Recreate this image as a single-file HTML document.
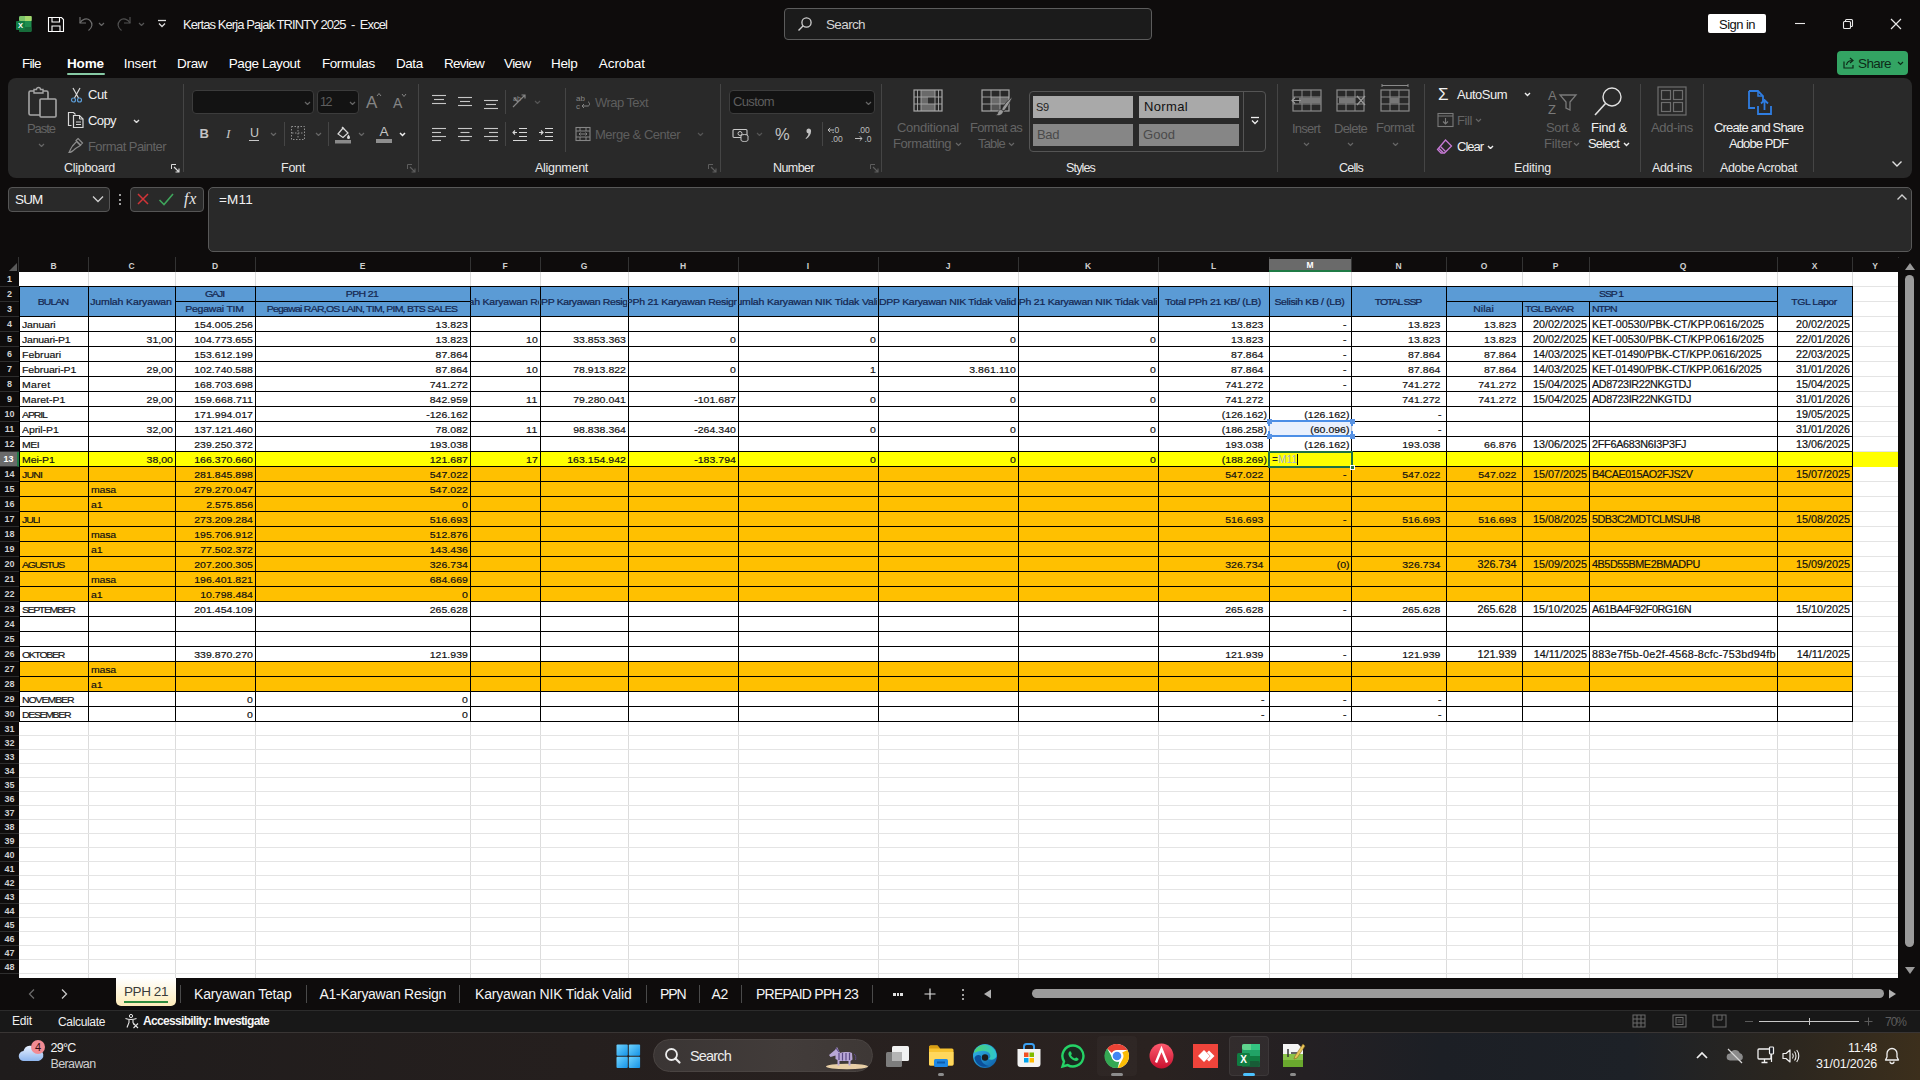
<!DOCTYPE html>
<html lang="id">
<head>
<meta charset="utf-8">
<title>Kertas Kerja Pajak TRINTY 2025 - Excel</title>
<style>
*{box-sizing:border-box;margin:0;padding:0}
html,body{width:1920px;height:1080px;overflow:hidden;background:#0e0c0c}
body{font-family:"Liberation Sans",sans-serif;color:#fff;position:relative;font-size:13px}
div,i,span,svg{position:absolute}
span{position:static}
i{display:block;font-style:normal}
.t{white-space:pre;line-height:1}
/* grid */
.sheet{background:#fff}
.vl{width:1px;background:#dcdcdc}
.hl{left:19px;width:1879px;height:1px;background:#e4e4e4}
.colhdr{background:#0e0c0c}
.ch{top:259px;height:13px;line-height:14px;text-align:center;font-size:8.5px;color:#d0d0d0;font-weight:bold}
.ch.sel{background:#6a6a6a;color:#fff;border-bottom:2px solid #1f7a45;top:259px;height:13px;line-height:13px}
.chs{top:257px;width:1px;height:15px;background:#333}
.corner{left:9px;top:263px;width:0;height:0;border-left:8px solid transparent;border-bottom:8px solid #5a5a5a}
.rowhdr{background:#0e0c0c}
.rh{left:0;width:19px;text-align:center;font-size:9px;color:#d0d0d0;font-weight:bold;border-bottom:1px solid #2e2e2e}
.rh.sel{background:#6a6a6a;color:#fff;border-right:2px solid #1f7a45}
.bh{height:1px;background:#000}
.bv{width:1px;background:#000}
.ht{-webkit-text-stroke:.25px #14264f;overflow:hidden;text-align:center;font-size:10.5px;color:#14264f;white-space:nowrap;display:flex;justify-content:center;align-items:center}
.ht span{flex:none;line-height:12px;transform:translateY(-.8px) scaleY(.92);transform-origin:50% 78%}
.ht.l{justify-content:flex-start;padding-left:3px}
.ct{-webkit-text-stroke:.2px #111;height:15px;line-height:15.5px;font-size:10.5px;color:#111;white-space:nowrap;overflow:hidden}
.ct{transform:scaleY(.92);transform-origin:0 11.4px}
.ct.ar{transform:none}
.ct.r{text-align:right}
.ct.l{text-align:left}
.ct.ar{font-size:10.8px}
.refcell{background:rgba(228,236,252,.8);border:2px solid #4c8ee6;border-left:2px dashed #4c8ee6;border-right:2px dashed #4c8ee6}
.rhd{width:5px;height:5px;background:#5a93e2}
.editcell{background:#ffff00;border:2px solid #1e7145;font-size:10px;line-height:13px;color:#222;padding-left:2px;white-space:nowrap;letter-spacing:.2px}
.editcell .ref{color:#a3b3dc}
.editcell .caret{position:static;display:inline-block;width:1px;height:11px;background:#000;vertical-align:-2px}
.fillh{width:5px;height:5px;background:#1e7145;border:1px solid #fff}
</style>
</head>
<body>
<div id="titlebar">
<svg style="left:16px;top:15px;" width="18" height="18" viewBox="0 0 18 18" fill="none"><rect x="3" y="1" width="12.5" height="16" rx="1.5" fill="#1e8e4e"/><rect x="3" y="1" width="12.5" height="5" rx="1.5" fill="#7cc46a"/><rect x="9" y="1" width="6.5" height="5" fill="#a5d86e"/><rect x="3" y="12" width="12.5" height="5" rx="1" fill="#176b3a"/><rect x="0" y="6" width="9" height="9" rx="1" fill="#107c41"/><text x="4.5" y="13" font-family="Liberation Sans,sans-serif" font-size="7.5" font-weight="bold" fill="#fff" text-anchor="middle">X</text></svg>
<svg style="left:47px;top:15px;" width="18" height="18" viewBox="0 0 18 18" fill="none"><path d="M1.5 2.5h13l2 2V16.5H1.5z" stroke="#fff" stroke-width="1.1"/><path d="M5 2.5v4.5h7.5V2.5M5 16.5v-5.5h8V16.5" stroke="#fff" stroke-width="1.1"/></svg>
<svg style="left:77px;top:15px;" width="18" height="18" viewBox="0 0 18 18" fill="none"><path d="M3 2v6h6" stroke="#6e6e6e" stroke-width="1.2"/><path d="M3 8c2-4 7-5.5 10-2.5s2.5 7-1.5 10" stroke="#6e6e6e" stroke-width="1.2"/></svg>
<svg style="left:97.5px;top:21.75px;" width="7" height="4.5" viewBox="0 0 7 4.5" fill="none"><path d="M1 1 L3.5 3.5 L6 1" stroke="#666" stroke-width="1.2"/></svg>
<svg style="left:115px;top:15px;" width="18" height="18" viewBox="0 0 18 18" fill="none"><path d="M15 2v6H9" stroke="#505050" stroke-width="1.2"/><path d="M15 8c-2-4-7-5.5-10-2.5s-2.5 7 1.5 10" stroke="#505050" stroke-width="1.2"/></svg>
<svg style="left:137.5px;top:21.75px;" width="7" height="4.5" viewBox="0 0 7 4.5" fill="none"><path d="M1 1 L3.5 3.5 L6 1" stroke="#555" stroke-width="1.2"/></svg>
<svg style="left:157px;top:19px;" width="10" height="9" viewBox="0 0 10 9" fill="none"><path d="M1 1.5h8" stroke="#ddd" stroke-width="1.3"/><path d="M2 4.5l3 3 3-3" stroke="#ddd" stroke-width="1.3"/></svg>
<div class="t" style="left:183px;top:18.0px;font-size:13px;color:#f2f2f2;letter-spacing:-0.92px;">Kertas Kerja Pajak TRINTY 2025  -  Excel</div>
<div style="left:784px;top:8px;width:368px;height:32px;background:#1b1b1b;border:1px solid #5c5c5c;border-radius:4px"></div>
<svg style="left:797px;top:16px;" width="16" height="16" viewBox="0 0 16 16" fill="none"><circle cx="9.5" cy="6.5" r="4.6" stroke="#d0d0d0" stroke-width="1.3"/><path d="M6.2 9.8L1.5 14.5" stroke="#d0d0d0" stroke-width="1.4"/></svg>
<div class="t" style="left:826px;top:17.8px;font-size:13.5px;color:#d4d4d4;letter-spacing:-0.63px;">Search</div>
<div style="left:1708px;top:14px;width:58px;height:19px;background:#fff;border-radius:2px"></div>
<div class="t" style="left:1719px;top:18.0px;font-size:13px;color:#111;letter-spacing:-0.54px;">Sign in</div>
<svg style="left:1792px;top:18px;" width="16" height="12" viewBox="0 0 16 12" fill="none"><path d="M3 5.5h10" stroke="#e8e8e8" stroke-width="1.1"/></svg>
<svg style="left:1841px;top:17px;" width="14" height="14" viewBox="0 0 14 14" fill="none"><rect x="2.5" y="4.5" width="7" height="7" rx="1" stroke="#e8e8e8" stroke-width="1.1"/><path d="M4.5 4.5V3.5a1 1 0 011-1h5a1 1 0 011 1v5a1 1 0 01-1 1H9.5" stroke="#e8e8e8" stroke-width="1.1"/></svg>
<svg style="left:1889px;top:17px;" width="14" height="14" viewBox="0 0 14 14" fill="none"><path d="M2 2l10 10M12 2L2 12" stroke="#e8e8e8" stroke-width="1.2"/></svg>
</div>
<div id="tabs">
<div class="t" style="left:22px;top:56.8px;font-size:13.5px;color:#fff;letter-spacing:-0.76px;">File</div>
<div class="t" style="left:67px;top:56.8px;font-size:13.5px;color:#fff;letter-spacing:-0.13px;font-weight:bold;">Home</div>
<div class="t" style="left:123.7px;top:56.8px;font-size:13.5px;color:#fff;letter-spacing:-0.24px;">Insert</div>
<div class="t" style="left:177px;top:56.8px;font-size:13.5px;color:#fff;letter-spacing:-0.3px;">Draw</div>
<div class="t" style="left:228.7px;top:56.8px;font-size:13.5px;color:#fff;letter-spacing:-0.41px;">Page Layout</div>
<div class="t" style="left:322px;top:56.8px;font-size:13.5px;color:#fff;letter-spacing:-0.44px;">Formulas</div>
<div class="t" style="left:396px;top:56.8px;font-size:13.5px;color:#fff;letter-spacing:-0.45px;">Data</div>
<div class="t" style="left:444px;top:56.8px;font-size:13.5px;color:#fff;letter-spacing:-0.71px;">Review</div>
<div class="t" style="left:504px;top:56.8px;font-size:13.5px;color:#fff;letter-spacing:-0.58px;">View</div>
<div class="t" style="left:551px;top:56.8px;font-size:13.5px;color:#fff;letter-spacing:-0.37px;">Help</div>
<div class="t" style="left:598.7px;top:56.8px;font-size:13.5px;color:#fff;letter-spacing:-0.03px;">Acrobat</div>
<div style="left:67px;top:73px;width:38px;height:2px;background:#86c9a4;border-radius:1px"></div>
<div style="left:1837px;top:51px;width:71px;height:24px;background:#33a463;border-radius:4px"></div>
<svg style="left:1842px;top:56px;" width="14" height="14" viewBox="0 0 14 14" fill="none"><path d="M2 5.5v6.5h9V9" stroke="#0d2a18" stroke-width="1.2"/><path d="M4.5 9c.5-3 2.5-4.5 6-4.5M8 2l3 2.5L8 7" stroke="#0d2a18" stroke-width="1.2"/></svg>
<div class="t" style="left:1858px;top:56.8px;font-size:13.5px;color:#0d2a18;letter-spacing:-0.6px;">Share</div>
<svg style="left:1896.5px;top:61.25px;" width="7" height="4.5" viewBox="0 0 7 4.5" fill="none"><path d="M1 1 L3.5 3.5 L6 1" stroke="#0d2a18" stroke-width="1.2"/></svg>
</div><div id="ribbon">
<div style="left:8px;top:78px;width:1904px;height:100px;background:#292929;border-radius:8px"></div>
<div style="left:565px;top:88px;width:1px;height:64px;background:#454545"></div>
<div style="left:183px;top:84px;width:1px;height:88px;background:#454545"></div>
<div style="left:418px;top:84px;width:1px;height:88px;background:#454545"></div>
<div style="left:720px;top:84px;width:1px;height:88px;background:#454545"></div>
<div style="left:881px;top:84px;width:1px;height:88px;background:#454545"></div>
<div style="left:1277px;top:84px;width:1px;height:88px;background:#454545"></div>
<div style="left:1424px;top:84px;width:1px;height:88px;background:#454545"></div>
<div style="left:1640px;top:84px;width:1px;height:88px;background:#454545"></div>
<div style="left:1703px;top:84px;width:1px;height:88px;background:#454545"></div>
<div style="left:1813px;top:84px;width:1px;height:88px;background:#454545"></div>
<div style="left:284px;top:122px;width:1px;height:24px;background:#454545"></div>
<div style="left:328px;top:122px;width:1px;height:24px;background:#454545"></div>
<div style="left:505px;top:122px;width:1px;height:24px;background:#454545"></div>
<div style="left:822px;top:122px;width:1px;height:24px;background:#454545"></div>
<div style="left:505px;top:90px;width:1px;height:24px;background:#454545"></div>
<svg style="left:27px;top:86px;" width="32" height="34" viewBox="0 0 32 34" fill="none"><rect x="2" y="5" width="19" height="24" rx="1.5" stroke="#a6a6a6" stroke-width="1.6"/><path d="M7 5V3.5h2.5a2 2 0 014 0H16V5v2H7z" stroke="#a6a6a6" stroke-width="1.4" fill="#292929"/><rect x="13" y="13" width="16" height="18" rx="1" stroke="#a6a6a6" stroke-width="1.6" fill="#292929"/></svg>
<div class="t" style="left:27px;top:122.0px;font-size:13px;color:#646464;letter-spacing:-1.05px;">Paste</div>
<svg style="left:37.5px;top:142.75px;" width="7" height="4.5" viewBox="0 0 7 4.5" fill="none"><path d="M1 1 L3.5 3.5 L6 1" stroke="#666" stroke-width="1.2"/></svg>
<svg style="left:68px;top:86px;" width="18" height="18" viewBox="0 0 18 18" fill="none"><path d="M5 2l5.5 10M12 2L6.5 12" stroke="#d8d8d8" stroke-width="1.2"/><circle cx="5.5" cy="14" r="2" stroke="#5b9bd5" stroke-width="1.2"/><circle cx="11.5" cy="14" r="2" stroke="#5b9bd5" stroke-width="1.2"/></svg>
<div class="t" style="left:88px;top:88.0px;font-size:13px;color:#f0f0f0;letter-spacing:-0.41px;">Cut</div>
<svg style="left:67px;top:111px;" width="18" height="18" viewBox="0 0 18 18" fill="none"><path d="M4.5 14.5H1.5V1.5h5l2 2" stroke="#d8d8d8" stroke-width="1.2"/><path d="M6.5 4.5h6l3.5 3.5v8.5h-9.5z" stroke="#d8d8d8" stroke-width="1.2"/><path d="M12.5 4.5v3.5h3.5" stroke="#d8d8d8" stroke-width="1"/><path d="M9 11h5M9 13.5h5" stroke="#d8d8d8" stroke-width="1"/></svg>
<div class="t" style="left:88px;top:113.5px;font-size:13px;color:#f0f0f0;letter-spacing:-0.59px;">Copy</div>
<svg style="left:132.5px;top:118.75px;" width="7" height="4.5" viewBox="0 0 7 4.5" fill="none"><path d="M1 1 L3.5 3.5 L6 1" stroke="#ddd" stroke-width="1.4"/></svg>
<svg style="left:67px;top:137px;" width="18" height="18" viewBox="0 0 18 18" fill="none"><path d="M11 1.5l4.5 4.5-2 2-4.5-4.5zM9.5 4.5l4 4-5 3c-2 2-4 4-6.5 4 1-2 2-4.5 3.5-6.5z" stroke="#8c8c8c" stroke-width="1.2"/></svg>
<div class="t" style="left:88px;top:139.5px;font-size:13px;color:#646464;letter-spacing:-0.57px;">Format Painter</div>
<div class="t" style="left:64px;top:162.2px;font-size:12.5px;color:#e8e8e8;letter-spacing:-0.28px;">Clipboard</div>
<svg style="left:171px;top:164px;" width="9" height="9" viewBox="0 0 9 9" fill="none"><path d="M0.5 5V0.5H5" stroke="#dcdcdc" stroke-width="1"/><path d="M3 3l5 5M8 4.5V8H4.5" stroke="#dcdcdc" stroke-width="1.1"/></svg>
<div style="left:192px;top:90px;width:122px;height:24px;background:#131313;border:1px solid #3c3c3c;border-radius:4px"></div>
<svg style="left:303.5px;top:100.75px;" width="7" height="4.5" viewBox="0 0 7 4.5" fill="none"><path d="M1 1 L3.5 3.5 L6 1" stroke="#666" stroke-width="1.2"/></svg>
<div style="left:317px;top:90px;width:42px;height:24px;background:#131313;border:1px solid #3c3c3c;border-radius:4px"></div>
<div class="t" style="left:320px;top:96.2px;font-size:12.5px;color:#5e5e5e;letter-spacing:-1.45px;">12</div>
<svg style="left:348.5px;top:100.75px;" width="7" height="4.5" viewBox="0 0 7 4.5" fill="none"><path d="M1 1 L3.5 3.5 L6 1" stroke="#666" stroke-width="1.2"/></svg>
<div class="t" style="left:366px;top:93.5px;font-size:17px;color:#858585;letter-spacing:-0.34px;">A</div>
<svg style="left:376px;top:92px;" width="6" height="5" viewBox="0 0 6 5" fill="none"><path d="M1 4l2-2.5 2 2.5" stroke="#858585" stroke-width="1"/></svg>
<div class="t" style="left:393px;top:96.0px;font-size:14px;color:#858585;letter-spacing:-0.34px;">A</div>
<svg style="left:401px;top:93px;" width="6" height="5" viewBox="0 0 6 5" fill="none"><path d="M1 1l2 2.5 2-2.5" stroke="#858585" stroke-width="1"/></svg>
<div class="t" style="left:199.5px;top:126.5px;font-size:13px;color:#c4c4c4;letter-spacing:-1.89px;font-weight:bold;">B</div>
<div class="t" style="left:226px;top:127.2px;font-size:13.5px;color:#c4c4c4;letter-spacing:1.25px;font-style:italic;font-family:Liberation Serif,serif;">I</div>
<div class="t" style="left:250px;top:126.8px;font-size:12.5px;color:#c8c8c8;letter-spacing:-1.03px;">U</div>
<div style="left:249px;top:139.5px;width:10px;height:1px;background:#c8c8c8"></div>
<svg style="left:269.5px;top:131.75px;" width="7" height="4.5" viewBox="0 0 7 4.5" fill="none"><path d="M1 1 L3.5 3.5 L6 1" stroke="#666" stroke-width="1.2"/></svg>
<svg style="left:290px;top:125px;" width="16" height="16" viewBox="0 0 16 16" fill="none"><rect x="1.5" y="1.5" width="13" height="13" stroke="#909090" stroke-width="1" stroke-dasharray="1.5 1.5"/><path d="M8 2v12M2 8h12" stroke="#909090" stroke-width="1" stroke-dasharray="1.5 1.5"/></svg>
<svg style="left:314.5px;top:131.75px;" width="7" height="4.5" viewBox="0 0 7 4.5" fill="none"><path d="M1 1 L3.5 3.5 L6 1" stroke="#666" stroke-width="1.2"/></svg>
<svg style="left:334px;top:124px;" width="18" height="20" viewBox="0 0 18 20" fill="none"><path d="M4 10l5-6 5 5-5 4.5z" stroke="#d8d8d8" stroke-width="1.2"/><path d="M8 3l2 2" stroke="#d8d8d8" stroke-width="1.2"/><path d="M14.5 10.5c1 1.5 1.5 2.2 1.5 3a1.5 1.5 0 01-3 0c0-.8.5-1.5 1.5-3z" fill="#d8d8d8"/><rect x="1" y="16" width="16" height="3.5" fill="#8a8a8a"/></svg>
<svg style="left:357.5px;top:131.75px;" width="7" height="4.5" viewBox="0 0 7 4.5" fill="none"><path d="M1 1 L3.5 3.5 L6 1" stroke="#666" stroke-width="1.2"/></svg>
<div class="t" style="left:379.5px;top:125.2px;font-size:13.5px;color:#c4c4c4;letter-spacing:0.5px;">A</div>
<div style="left:376px;top:139px;width:16px;height:3.5px;background:#8e8e8e"></div>
<svg style="left:399.0px;top:132.25px;" width="7" height="4.5" viewBox="0 0 7 4.5" fill="none"><path d="M1 1 L3.5 3.5 L6 1" stroke="#eee" stroke-width="1.5"/></svg>
<div class="t" style="left:281px;top:162.2px;font-size:12.5px;color:#e8e8e8;letter-spacing:-0.25px;">Font</div>
<svg style="left:407px;top:164px;" width="9" height="9" viewBox="0 0 9 9" fill="none"><path d="M0.5 5V0.5H5" stroke="#5e5e5e" stroke-width="1"/><path d="M3 3l5 5M8 4.5V8H4.5" stroke="#5e5e5e" stroke-width="1.1"/></svg>
<svg style="left:431px;top:93px;" width="16" height="16" viewBox="0 0 16 16" fill="none"><path d="M1 2.5h14" stroke="#c6c6c6" stroke-width="1.1"/><path d="M3 6.5h10" stroke="#c6c6c6" stroke-width="1.1"/><path d="M1 10.5h14" stroke="#c6c6c6" stroke-width="1.1"/></svg>
<svg style="left:457px;top:95px;" width="16" height="16" viewBox="0 0 16 16" fill="none"><path d="M1 2.5h14" stroke="#c6c6c6" stroke-width="1.1"/><path d="M3 6.5h10" stroke="#c6c6c6" stroke-width="1.1"/><path d="M1 10.5h14" stroke="#c6c6c6" stroke-width="1.1"/></svg>
<svg style="left:483px;top:98px;" width="16" height="16" viewBox="0 0 16 16" fill="none"><path d="M1 2.5h14" stroke="#c6c6c6" stroke-width="1.1"/><path d="M3 6.5h10" stroke="#c6c6c6" stroke-width="1.1"/><path d="M1 10.5h14" stroke="#c6c6c6" stroke-width="1.1"/></svg>
<svg style="left:431px;top:126px;" width="16" height="16" viewBox="0 0 16 16" fill="none"><path d="M1 2.5h14" stroke="#c6c6c6" stroke-width="1.1"/><path d="M1 6.5h9" stroke="#c6c6c6" stroke-width="1.1"/><path d="M1 10.5h14" stroke="#c6c6c6" stroke-width="1.1"/><path d="M1 14.5h9" stroke="#c6c6c6" stroke-width="1.1"/></svg>
<svg style="left:457px;top:126px;" width="16" height="16" viewBox="0 0 16 16" fill="none"><path d="M1 2.5h14" stroke="#c6c6c6" stroke-width="1.1"/><path d="M3.5 6.5h9" stroke="#c6c6c6" stroke-width="1.1"/><path d="M1 10.5h14" stroke="#c6c6c6" stroke-width="1.1"/><path d="M3.5 14.5h9" stroke="#c6c6c6" stroke-width="1.1"/></svg>
<svg style="left:483px;top:126px;" width="16" height="16" viewBox="0 0 16 16" fill="none"><path d="M1 2.5h14" stroke="#c6c6c6" stroke-width="1.1"/><path d="M6 6.5h9" stroke="#c6c6c6" stroke-width="1.1"/><path d="M1 10.5h14" stroke="#c6c6c6" stroke-width="1.1"/><path d="M6 14.5h9" stroke="#c6c6c6" stroke-width="1.1"/></svg>
<svg style="left:511px;top:92px;" width="18" height="18" viewBox="0 0 18 18" fill="none"><path d="M2 15L14 3M10.5 3H14v3.5" stroke="#858585" stroke-width="1.2"/><path d="M3 6l4 4" stroke="#858585" stroke-width="1.2"/><text x="2" y="9" font-size="7" fill="#858585" font-family="Liberation Sans,sans-serif">ab</text></svg>
<svg style="left:533.5px;top:99.75px;" width="7" height="4.5" viewBox="0 0 7 4.5" fill="none"><path d="M1 1 L3.5 3.5 L6 1" stroke="#555" stroke-width="1.2"/></svg>
<svg style="left:512px;top:126px;" width="16" height="16" viewBox="0 0 16 16" fill="none"><path d="M7 2.5h8M7 6.5h8M7 10.5h8M1 14.5h14" stroke="#d8d8d8" stroke-width="1.1"/><path d="M5 6.5H1M3 4.5l-2 2 2 2" stroke="#d8d8d8" stroke-width="1.1"/></svg>
<svg style="left:538px;top:126px;" width="16" height="16" viewBox="0 0 16 16" fill="none"><path d="M7 2.5h8M7 6.5h8M7 10.5h8M1 14.5h14" stroke="#d8d8d8" stroke-width="1.1"/><path d="M1 6.5h4M3 4.5l2 2-2 2" stroke="#d8d8d8" stroke-width="1.1"/></svg>
<svg style="left:575px;top:94px;" width="16" height="16" viewBox="0 0 16 16" fill="none"><text x="1" y="7" font-size="8" fill="#858585" font-family="Liberation Sans,sans-serif">ab</text><text x="1" y="15" font-size="8" fill="#858585" font-family="Liberation Sans,sans-serif">c</text><path d="M7 12h6c2 0 2-4 0-4M9 10l-2 2 2 2" stroke="#858585" stroke-width="1"/></svg>
<div class="t" style="left:595px;top:95.5px;font-size:13px;color:#5e5e5e;letter-spacing:-0.56px;">Wrap Text</div>
<svg style="left:575px;top:126px;" width="16" height="16" viewBox="0 0 16 16" fill="none"><rect x="1" y="1.5" width="14" height="13" stroke="#858585" stroke-width="1.1"/><path d="M1 5h14M1 11h14M5 1.5V5M11 1.5V5M5 11v3.5M11 11v3.5" stroke="#858585" stroke-width="1"/><path d="M4 8h8M5.5 6.5L4 8l1.5 1.5M10.5 6.5L12 8l-1.5 1.5" stroke="#858585" stroke-width="1"/></svg>
<div class="t" style="left:595px;top:127.5px;font-size:13px;color:#5e5e5e;letter-spacing:-0.48px;">Merge &amp; Center</div>
<svg style="left:696.5px;top:131.75px;" width="7" height="4.5" viewBox="0 0 7 4.5" fill="none"><path d="M1 1 L3.5 3.5 L6 1" stroke="#555" stroke-width="1.2"/></svg>
<div class="t" style="left:535px;top:162.2px;font-size:12.5px;color:#e8e8e8;letter-spacing:-0.29px;">Alignment</div>
<svg style="left:708px;top:164px;" width="9" height="9" viewBox="0 0 9 9" fill="none"><path d="M0.5 5V0.5H5" stroke="#5e5e5e" stroke-width="1"/><path d="M3 3l5 5M8 4.5V8H4.5" stroke="#5e5e5e" stroke-width="1.1"/></svg>
<div style="left:729px;top:90px;width:146px;height:24px;background:#131313;border:1px solid #3c3c3c;border-radius:4px"></div>
<div class="t" style="left:733px;top:95.0px;font-size:13px;color:#5e5e5e;letter-spacing:-0.63px;">Custom</div>
<svg style="left:864.5px;top:100.75px;" width="7" height="4.5" viewBox="0 0 7 4.5" fill="none"><path d="M1 1 L3.5 3.5 L6 1" stroke="#666" stroke-width="1.2"/></svg>
<svg style="left:732px;top:127px;" width="18" height="16" viewBox="0 0 18 16" fill="none"><rect x="1" y="2.5" width="14" height="8" rx="1" stroke="#c8c8c8" stroke-width="1.1"/><circle cx="8" cy="6.5" r="2" stroke="#c8c8c8" stroke-width="1"/><ellipse cx="12.5" cy="9" rx="3.5" ry="1.5" stroke="#c8c8c8" stroke-width="1" fill="#292929"/><path d="M9 9v4c0 2 7 2 7 0V9" stroke="#c8c8c8" stroke-width="1" fill="#292929"/></svg>
<svg style="left:755.5px;top:131.75px;" width="7" height="4.5" viewBox="0 0 7 4.5" fill="none"><path d="M1 1 L3.5 3.5 L6 1" stroke="#555" stroke-width="1.2"/></svg>
<div class="t" style="left:775px;top:126.2px;font-size:16.5px;color:#c4c4c4;letter-spacing:0.33px;">%</div>
<svg style="left:802px;top:126px;" width="12" height="16" viewBox="0 0 12 16" fill="none"><path d="M6.5 2.5a2.6 2.6 0 012.6 2.6c0 3.5-2 6-5 8l-.6-.8c1.8-1.4 2.8-2.8 3-4.700a2.6 2.6 0 010-5.1z" fill="#c0c0c0"/></svg>
<svg style="left:826px;top:125px;" width="20" height="19" viewBox="0 0 20 19" fill="none"><text x="8.5" y="8" font-size="8.5" fill="#bdbdbd" font-family="Liberation Sans,sans-serif">0</text><text x="5" y="17" font-size="8.5" fill="#bdbdbd" font-family="Liberation Sans,sans-serif">.00</text><path d="M2 5h6M4.2 2.8L2 5l2.2 2.2" stroke="#bdbdbd" stroke-width="1"/><rect x="6.5" y="6.8" width="1.2" height="1.2" fill="#bdbdbd"/></svg>
<svg style="left:852px;top:125px;" width="20" height="19" viewBox="0 0 20 19" fill="none"><text x="6" y="8" font-size="8.5" fill="#bdbdbd" font-family="Liberation Sans,sans-serif">.00</text><text x="12.5" y="17" font-size="8.5" fill="#bdbdbd" font-family="Liberation Sans,sans-serif">.0</text><path d="M3 13.5h7M7.8 11.3l2.2 2.2-2.2 2.2" stroke="#bdbdbd" stroke-width="1"/></svg>
<div class="t" style="left:773px;top:162.2px;font-size:12.5px;color:#e8e8e8;letter-spacing:-0.58px;">Number</div>
<svg style="left:870px;top:164px;" width="9" height="9" viewBox="0 0 9 9" fill="none"><path d="M0.5 5V0.5H5" stroke="#5e5e5e" stroke-width="1"/><path d="M3 3l5 5M8 4.5V8H4.5" stroke="#5e5e5e" stroke-width="1.1"/></svg>
<svg style="left:913px;top:89px;" width="30" height="24" viewBox="0 0 30 24" fill="none"><rect x="8" y="1" width="14" height="7" fill="#6a6a6a"/><rect x="8" y="8" width="7" height="7" fill="#6a6a6a"/><rect x="8" y="15" width="14" height="7" fill="#6a6a6a"/><rect x="15" y="8" width="7" height="7" fill="#2f2f2f"/><rect x="1" y="1" width="28" height="21" stroke="#a8a8a8" stroke-width="1.2"/><path d="M1 8h28M1 15h28M8 1v21M22 1v21M25.5 1v21M4.5 1v21" stroke="#a8a8a8" stroke-width=".900"/></svg>
<div class="t" style="left:897px;top:121.0px;font-size:13px;color:#646464;letter-spacing:-0.28px;">Conditional</div>
<div class="t" style="left:893px;top:137.0px;font-size:13px;color:#646464;letter-spacing:-0.41px;">Formatting</div>
<svg style="left:954.5px;top:142.25px;" width="7" height="4.5" viewBox="0 0 7 4.5" fill="none"><path d="M1 1 L3.5 3.5 L6 1" stroke="#666" stroke-width="1.2"/></svg>
<svg style="left:981px;top:89px;" width="32" height="28" viewBox="0 0 32 28" fill="none"><rect x="10" y="8" width="18" height="7" fill="#6a6a6a"/><rect x="10" y="15" width="9" height="7" fill="#555"/><rect x="1" y="1" width="27" height="21" stroke="#a8a8a8" stroke-width="1.2"/><path d="M1 8h27M1 15h27M10 1v21M19 1v21" stroke="#a8a8a8" stroke-width=".900"/><path d="M30.5 8.5c-4 3-8 8-10 12l2.5 1.5c3-4 6-8 8-13z" fill="#9a9a9a" stroke="#292929" stroke-width=".8"/><path d="M20 20.5c-2 0-3 1.5-3.5 4.5-1 1-2 1-3 .5 3 2 8 1.5 9-3.5z" fill="#9a9a9a" stroke="#292929" stroke-width=".6"/></svg>
<div class="t" style="left:970px;top:121.0px;font-size:13px;color:#646464;letter-spacing:-0.72px;">Format as</div>
<div class="t" style="left:978px;top:137.0px;font-size:13px;color:#646464;letter-spacing:-0.82px;">Table</div>
<svg style="left:1007.5px;top:142.25px;" width="7" height="4.5" viewBox="0 0 7 4.5" fill="none"><path d="M1 1 L3.5 3.5 L6 1" stroke="#666" stroke-width="1.2"/></svg>
<div style="left:1029px;top:91px;width:237px;height:61px;border:1px solid #555;border-radius:4px"></div>
<div style="left:1243px;top:91px;width:1px;height:61px;background:#555"></div>
<div style="left:1033px;top:96px;width:100px;height:22px;background:#a9a9a9"></div>
<div class="t" style="left:1036px;top:102.0px;font-size:11px;color:#222;letter-spacing:-0.23px;">S9</div>
<div style="left:1139px;top:96px;width:100px;height:22px;background:#a9a9a9"></div>
<div class="t" style="left:1144px;top:99.5px;font-size:13px;color:#111;letter-spacing:0.35px;">Normal</div>
<div style="left:1033px;top:124px;width:100px;height:22px;background:#868686"></div>
<div class="t" style="left:1037px;top:127.5px;font-size:13px;color:#4a4a4a;letter-spacing:-0.38px;">Bad</div>
<div style="left:1139px;top:124px;width:100px;height:22px;background:#868686"></div>
<div class="t" style="left:1143px;top:127.5px;font-size:13px;color:#4a4a4a;letter-spacing:0.05px;">Good</div>
<svg style="left:1250px;top:116px;" width="10" height="9" viewBox="0 0 10 9" fill="none"><path d="M1 1.5h8" stroke="#eee" stroke-width="1.3"/><path d="M2 4.5l3 3 3-3" stroke="#eee" stroke-width="1.3"/></svg>
<div class="t" style="left:1066px;top:162.2px;font-size:12.5px;color:#e8e8e8;letter-spacing:-0.84px;">Styles</div>
<svg style="left:1291px;top:89px;" width="32" height="24" viewBox="0 0 32 24" fill="none"><rect x="2" y="1" width="28" height="21" stroke="#8a8a8a" stroke-width="1.2"/><path d="M2 8h28M2 15h28M11 1v21M20 1v21" stroke="#8a8a8a" stroke-width="1"/><rect x="8" y="8.5" width="22" height="6" fill="#777"/><path d="M1 11.5h9M4 8.5l-3 3 3 3" stroke="#9a9a9a" stroke-width="1.2"/></svg>
<div class="t" style="left:1292px;top:122.0px;font-size:13px;color:#646464;letter-spacing:-0.75px;">Insert</div>
<svg style="left:1303.0px;top:142.25px;" width="7" height="4.5" viewBox="0 0 7 4.5" fill="none"><path d="M1 1 L3.5 3.5 L6 1" stroke="#666" stroke-width="1.2"/></svg>
<svg style="left:1336px;top:89px;" width="32" height="24" viewBox="0 0 32 24" fill="none"><rect x="1" y="1" width="27" height="21" stroke="#8a8a8a" stroke-width="1.2"/><path d="M1 8h27M1 15h27M10 1v21M19 1v21" stroke="#8a8a8a" stroke-width="1"/><rect x="3" y="8.5" width="16" height="6" fill="#777"/><path d="M21 7l8 9M29 7l-8 9" stroke="#9a9a9a" stroke-width="1.3"/></svg>
<div class="t" style="left:1334px;top:122.0px;font-size:13px;color:#646464;letter-spacing:-0.76px;">Delete</div>
<svg style="left:1346.5px;top:142.25px;" width="7" height="4.5" viewBox="0 0 7 4.5" fill="none"><path d="M1 1 L3.5 3.5 L6 1" stroke="#666" stroke-width="1.2"/></svg>
<svg style="left:1380px;top:84px;" width="30" height="29" viewBox="0 0 30 29" fill="none"><path d="M2 1.5h26M2 0v3M28 0v3" stroke="#8a8a8a" stroke-width="1"/><rect x="1" y="6" width="28" height="21" stroke="#8a8a8a" stroke-width="1.2"/><path d="M1 13h28M1 20h28M10 6v21M19 6v21" stroke="#8a8a8a" stroke-width="1"/><rect x="10" y="13.5" width="9" height="6" fill="#777"/></svg>
<div class="t" style="left:1376px;top:121.0px;font-size:13px;color:#646464;letter-spacing:-0.53px;">Format</div>
<svg style="left:1391.5px;top:141.75px;" width="7" height="4.5" viewBox="0 0 7 4.5" fill="none"><path d="M1 1 L3.5 3.5 L6 1" stroke="#666" stroke-width="1.2"/></svg>
<div class="t" style="left:1339px;top:162.2px;font-size:12.5px;color:#e8e8e8;letter-spacing:-0.76px;">Cells</div>
<div class="t" style="left:1438px;top:86.0px;font-size:17px;color:#f0f0f0;letter-spacing:1.49px;">Σ</div>
<div class="t" style="left:1457px;top:88.0px;font-size:13px;color:#f0f0f0;letter-spacing:-0.5px;">AutoSum</div>
<svg style="left:1523.5px;top:92.25px;" width="7" height="4.5" viewBox="0 0 7 4.5" fill="none"><path d="M1 1 L3.5 3.5 L6 1" stroke="#eee" stroke-width="1.4"/></svg>
<svg style="left:1437px;top:112px;" width="17" height="16" viewBox="0 0 17 16" fill="none"><rect x="1" y="1.5" width="15" height="13" stroke="#7a7a7a" stroke-width="1.1"/><path d="M1 4h15M8.5 6v6M6 9.5l2.5 2.5 2.5-2.5" stroke="#7a7a7a" stroke-width="1.1"/></svg>
<div class="t" style="left:1457px;top:113.5px;font-size:13px;color:#646464;letter-spacing:-0.4px;">Fill</div>
<svg style="left:1474.5px;top:118.25px;" width="7" height="4.5" viewBox="0 0 7 4.5" fill="none"><path d="M1 1 L3.5 3.5 L6 1" stroke="#666" stroke-width="1.2"/></svg>
<svg style="left:1436px;top:138px;" width="18" height="17" viewBox="0 0 18 17" fill="none"><path d="M9.5 2l6 6-7 7H5l-3.5-3.5z" stroke="#c77ad6" stroke-width="1.3"/><path d="M4.5 8.5l5 5" stroke="#c77ad6" stroke-width="1.3"/><path d="M2.5 11l3.5 3.5h2l-4.5-4.5z" fill="#c77ad6"/></svg>
<div class="t" style="left:1457px;top:139.5px;font-size:13px;color:#f0f0f0;letter-spacing:-1.01px;">Clear</div>
<svg style="left:1486.5px;top:144.75px;" width="7" height="4.5" viewBox="0 0 7 4.5" fill="none"><path d="M1 1 L3.5 3.5 L6 1" stroke="#eee" stroke-width="1.4"/></svg>
<svg style="left:1547px;top:87px;" width="32" height="30" viewBox="0 0 32 30" fill="none"><text x="1" y="13" font-size="13" fill="#7a7a7a" font-family="Liberation Sans,sans-serif">A</text><text x="1" y="27" font-size="13" fill="#7a7a7a" font-family="Liberation Sans,sans-serif">Z</text><path d="M13 8h16l-6 7v8l-4-2v-6z" stroke="#7a7a7a" stroke-width="1.3"/></svg>
<div class="t" style="left:1546px;top:121.0px;font-size:13px;color:#646464;letter-spacing:-0.35px;">Sort &amp;</div>
<div class="t" style="left:1544px;top:137.0px;font-size:13px;color:#646464;letter-spacing:-0.15px;">Filter</div>
<svg style="left:1572.5px;top:142.25px;" width="7" height="4.5" viewBox="0 0 7 4.5" fill="none"><path d="M1 1 L3.5 3.5 L6 1" stroke="#666" stroke-width="1.2"/></svg>
<svg style="left:1593px;top:86px;" width="32" height="32" viewBox="0 0 32 32" fill="none"><circle cx="19" cy="11" r="9" stroke="#e0e0e0" stroke-width="1.4"/><path d="M12.5 17.5L2 29" stroke="#e0e0e0" stroke-width="1.6"/></svg>
<div class="t" style="left:1591px;top:121.0px;font-size:13px;color:#f0f0f0;letter-spacing:-0.26px;">Find &amp;</div>
<div class="t" style="left:1588px;top:137.0px;font-size:13px;color:#f0f0f0;letter-spacing:-0.85px;">Select</div>
<svg style="left:1622.5px;top:142.25px;" width="7" height="4.5" viewBox="0 0 7 4.5" fill="none"><path d="M1 1 L3.5 3.5 L6 1" stroke="#eee" stroke-width="1.4"/></svg>
<div class="t" style="left:1514px;top:162.2px;font-size:12.5px;color:#e8e8e8;letter-spacing:-0.17px;">Editing</div>
<svg style="left:1657px;top:86px;" width="30" height="30" viewBox="0 0 30 30" fill="none"><rect x="1" y="1" width="28" height="28" stroke="#6e6e6e" stroke-width="1.2"/><rect x="4.5" y="4.5" width="9" height="9" stroke="#6e6e6e" stroke-width="1.2"/><rect x="16.5" y="4.5" width="9" height="9" stroke="#6e6e6e" stroke-width="1.2"/><rect x="4.5" y="16.5" width="9" height="9" stroke="#6e6e6e" stroke-width="1.2"/><rect x="16.5" y="16.5" width="9" height="9" stroke="#6e6e6e" stroke-width="1.2"/></svg>
<div class="t" style="left:1651px;top:121.0px;font-size:13px;color:#666;letter-spacing:-0.3px;">Add-ins</div>
<div class="t" style="left:1652px;top:162.2px;font-size:12.5px;color:#e8e8e8;letter-spacing:-0.34px;">Add-ins</div>
<svg style="left:1747px;top:89px;" width="26" height="28" viewBox="0 0 26 28" fill="none"><path d="M2 2h9l5 5v6M2 2v17h6" stroke="#2f7de1" stroke-width="1.8"/><path d="M11 2v5h5" stroke="#2f7de1" stroke-width="1.5"/><path d="M11 17v8h13v-8" stroke="#2f7de1" stroke-width="1.8"/><path d="M17.5 21V11M14 14.5l3.5-3.5 3.5 3.5" stroke="#2f7de1" stroke-width="1.8"/></svg>
<div class="t" style="left:1714px;top:121.0px;font-size:13px;color:#f0f0f0;letter-spacing:-0.85px;">Create and Share</div>
<div class="t" style="left:1729px;top:137.0px;font-size:13px;color:#f0f0f0;letter-spacing:-0.91px;">Adobe PDF</div>
<div class="t" style="left:1720px;top:162.2px;font-size:12.5px;color:#e8e8e8;letter-spacing:-0.38px;">Adobe Acrobat</div>
<svg style="left:1891px;top:160px;" width="12" height="8" viewBox="0 0 12 8" fill="none"><path d="M1.5 1.5l4.5 4.5 4.5-4.5" stroke="#e0e0e0" stroke-width="1.4"/></svg>
</div><div id="fbar">
<div style="left:8px;top:187px;width:102px;height:25px;background:#292929;border:1px solid #555;border-radius:4px"></div>
<div class="t" style="left:15px;top:192.8px;font-size:13.5px;color:#f2f2f2;letter-spacing:-0.83px;">SUM</div>
<svg style="left:91px;top:195px;" width="14" height="9" viewBox="0 0 14 9" fill="none"><path d="M2 1.5l5 5 5-5" stroke="#d0d0d0" stroke-width="1.3"/></svg>
<div style="left:119px;top:194px;width:2px;height:2px;background:#cfcfcf;border-radius:1px"></div>
<div style="left:119px;top:198.5px;width:2px;height:2px;background:#cfcfcf;border-radius:1px"></div>
<div style="left:119px;top:203px;width:2px;height:2px;background:#cfcfcf;border-radius:1px"></div>
<div style="left:130px;top:187px;width:74px;height:25px;background:#292929;border:1px solid #555;border-radius:4px"></div>
<svg style="left:136px;top:192px;" width="14" height="14" viewBox="0 0 14 14" fill="none"><path d="M2 2l10 10M12 2L2 12" stroke="#d13438" stroke-width="1.5"/></svg>
<svg style="left:158px;top:192px;" width="16" height="14" viewBox="0 0 16 14" fill="none"><path d="M1.5 8l4.5 4.5L15 2" stroke="#3fa45b" stroke-width="1.6"/></svg>
<div class="t" style="left:184px;top:190.5px;font-size:16px;color:#e6e6e6;letter-spacing:0.78px;font-style:italic;font-family:Liberation Serif,serif;">fx</div>
<div style="left:208px;top:186.5px;width:1704px;height:65px;background:#292929;border:1px solid #585858;border-radius:5px"></div>
<div class="t" style="left:219px;top:192.8px;font-size:13.5px;color:#f2f2f2;letter-spacing:0.21px;">=M11</div>
<svg style="left:1896px;top:193px;" width="12" height="8" viewBox="0 0 12 8" fill="none"><path d="M1.5 6.5l4.5-4.5 4.5 4.5" stroke="#d0d0d0" stroke-width="1.4"/></svg>
</div><div id="grid">
<div class="sheet" style="left:19px;top:272px;width:1879px;height:706px"></div>
<i class="vl" style="left:88px;top:272px;height:706px"></i>
<i class="vl" style="left:175px;top:272px;height:706px"></i>
<i class="vl" style="left:255px;top:272px;height:706px"></i>
<i class="vl" style="left:470px;top:272px;height:706px"></i>
<i class="vl" style="left:540px;top:272px;height:706px"></i>
<i class="vl" style="left:628px;top:272px;height:706px"></i>
<i class="vl" style="left:738px;top:272px;height:706px"></i>
<i class="vl" style="left:878px;top:272px;height:706px"></i>
<i class="vl" style="left:1018px;top:272px;height:706px"></i>
<i class="vl" style="left:1158px;top:272px;height:706px"></i>
<i class="vl" style="left:1269px;top:272px;height:706px"></i>
<i class="vl" style="left:1351px;top:272px;height:706px"></i>
<i class="vl" style="left:1446px;top:272px;height:706px"></i>
<i class="vl" style="left:1522px;top:272px;height:706px"></i>
<i class="vl" style="left:1589px;top:272px;height:706px"></i>
<i class="vl" style="left:1777px;top:272px;height:706px"></i>
<i class="vl" style="left:1852px;top:272px;height:706px"></i>
<i class="vl" style="left:1898px;top:272px;height:706px"></i>
<i class="hl" style="top:286px"></i>
<i class="hl" style="top:301px"></i>
<i class="hl" style="top:316px"></i>
<i class="hl" style="top:331px"></i>
<i class="hl" style="top:346px"></i>
<i class="hl" style="top:361px"></i>
<i class="hl" style="top:376px"></i>
<i class="hl" style="top:391px"></i>
<i class="hl" style="top:406px"></i>
<i class="hl" style="top:421px"></i>
<i class="hl" style="top:436px"></i>
<i class="hl" style="top:451px"></i>
<i class="hl" style="top:466px"></i>
<i class="hl" style="top:481px"></i>
<i class="hl" style="top:496px"></i>
<i class="hl" style="top:511px"></i>
<i class="hl" style="top:526px"></i>
<i class="hl" style="top:541px"></i>
<i class="hl" style="top:556px"></i>
<i class="hl" style="top:571px"></i>
<i class="hl" style="top:586px"></i>
<i class="hl" style="top:601px"></i>
<i class="hl" style="top:616px"></i>
<i class="hl" style="top:631px"></i>
<i class="hl" style="top:646px"></i>
<i class="hl" style="top:661px"></i>
<i class="hl" style="top:676px"></i>
<i class="hl" style="top:691px"></i>
<i class="hl" style="top:706px"></i>
<i class="hl" style="top:721px"></i>
<i class="hl" style="top:735px"></i>
<i class="hl" style="top:749px"></i>
<i class="hl" style="top:763px"></i>
<i class="hl" style="top:777px"></i>
<i class="hl" style="top:791px"></i>
<i class="hl" style="top:805px"></i>
<i class="hl" style="top:819px"></i>
<i class="hl" style="top:833px"></i>
<i class="hl" style="top:847px"></i>
<i class="hl" style="top:861px"></i>
<i class="hl" style="top:875px"></i>
<i class="hl" style="top:889px"></i>
<i class="hl" style="top:903px"></i>
<i class="hl" style="top:917px"></i>
<i class="hl" style="top:931px"></i>
<i class="hl" style="top:945px"></i>
<i class="hl" style="top:959px"></i>
<i class="hl" style="top:973px"></i>
<div class="colhdr" style="left:0;top:258px;width:1898px;height:14px"></div>
<div class="ch" style="left:19px;width:69px">B</div>
<i class="chs" style="left:88px"></i>
<div class="ch" style="left:88px;width:87px">C</div>
<i class="chs" style="left:175px"></i>
<div class="ch" style="left:175px;width:80px">D</div>
<i class="chs" style="left:255px"></i>
<div class="ch" style="left:255px;width:215px">E</div>
<i class="chs" style="left:470px"></i>
<div class="ch" style="left:470px;width:70px">F</div>
<i class="chs" style="left:540px"></i>
<div class="ch" style="left:540px;width:88px">G</div>
<i class="chs" style="left:628px"></i>
<div class="ch" style="left:628px;width:110px">H</div>
<i class="chs" style="left:738px"></i>
<div class="ch" style="left:738px;width:140px">I</div>
<i class="chs" style="left:878px"></i>
<div class="ch" style="left:878px;width:140px">J</div>
<i class="chs" style="left:1018px"></i>
<div class="ch" style="left:1018px;width:140px">K</div>
<i class="chs" style="left:1158px"></i>
<div class="ch" style="left:1158px;width:111px">L</div>
<i class="chs" style="left:1269px"></i>
<div class="ch sel" style="left:1269px;width:82px">M</div>
<i class="chs" style="left:1351px"></i>
<div class="ch" style="left:1351px;width:95px">N</div>
<i class="chs" style="left:1446px"></i>
<div class="ch" style="left:1446px;width:76px">O</div>
<i class="chs" style="left:1522px"></i>
<div class="ch" style="left:1522px;width:67px">P</div>
<i class="chs" style="left:1589px"></i>
<div class="ch" style="left:1589px;width:188px">Q</div>
<i class="chs" style="left:1777px"></i>
<div class="ch" style="left:1777px;width:75px">X</div>
<i class="chs" style="left:1852px"></i>
<div class="ch" style="left:1852px;width:46px">Y</div>
<i class="chs" style="left:1898px"></i>
<i class="chs" style="left:18px"></i>
<i class="corner"></i>
<div class="rowhdr" style="left:0;top:272px;width:19px;height:706px"></div>
<div class="rh" style="top:272px;height:15px;line-height:15px">1</div>
<div class="rh" style="top:287px;height:15px;line-height:15px">2</div>
<div class="rh" style="top:302px;height:15px;line-height:15px">3</div>
<div class="rh" style="top:317px;height:15px;line-height:15px">4</div>
<div class="rh" style="top:332px;height:15px;line-height:15px">5</div>
<div class="rh" style="top:347px;height:15px;line-height:15px">6</div>
<div class="rh" style="top:362px;height:15px;line-height:15px">7</div>
<div class="rh" style="top:377px;height:15px;line-height:15px">8</div>
<div class="rh" style="top:392px;height:15px;line-height:15px">9</div>
<div class="rh" style="top:407px;height:15px;line-height:15px">10</div>
<div class="rh" style="top:422px;height:15px;line-height:15px">11</div>
<div class="rh" style="top:437px;height:15px;line-height:15px">12</div>
<div class="rh sel" style="top:452px;height:15px;line-height:15px">13</div>
<div class="rh" style="top:467px;height:15px;line-height:15px">14</div>
<div class="rh" style="top:482px;height:15px;line-height:15px">15</div>
<div class="rh" style="top:497px;height:15px;line-height:15px">16</div>
<div class="rh" style="top:512px;height:15px;line-height:15px">17</div>
<div class="rh" style="top:527px;height:15px;line-height:15px">18</div>
<div class="rh" style="top:542px;height:15px;line-height:15px">19</div>
<div class="rh" style="top:557px;height:15px;line-height:15px">20</div>
<div class="rh" style="top:572px;height:15px;line-height:15px">21</div>
<div class="rh" style="top:587px;height:15px;line-height:15px">22</div>
<div class="rh" style="top:602px;height:15px;line-height:15px">23</div>
<div class="rh" style="top:617px;height:15px;line-height:15px">24</div>
<div class="rh" style="top:632px;height:15px;line-height:15px">25</div>
<div class="rh" style="top:647px;height:15px;line-height:15px">26</div>
<div class="rh" style="top:662px;height:15px;line-height:15px">27</div>
<div class="rh" style="top:677px;height:15px;line-height:15px">28</div>
<div class="rh" style="top:692px;height:15px;line-height:15px">29</div>
<div class="rh" style="top:707px;height:15px;line-height:15px">30</div>
<div class="rh" style="top:722px;height:14px;line-height:14px">31</div>
<div class="rh" style="top:736px;height:14px;line-height:14px">32</div>
<div class="rh" style="top:750px;height:14px;line-height:14px">33</div>
<div class="rh" style="top:764px;height:14px;line-height:14px">34</div>
<div class="rh" style="top:778px;height:14px;line-height:14px">35</div>
<div class="rh" style="top:792px;height:14px;line-height:14px">36</div>
<div class="rh" style="top:806px;height:14px;line-height:14px">37</div>
<div class="rh" style="top:820px;height:14px;line-height:14px">38</div>
<div class="rh" style="top:834px;height:14px;line-height:14px">39</div>
<div class="rh" style="top:848px;height:14px;line-height:14px">40</div>
<div class="rh" style="top:862px;height:14px;line-height:14px">41</div>
<div class="rh" style="top:876px;height:14px;line-height:14px">42</div>
<div class="rh" style="top:890px;height:14px;line-height:14px">43</div>
<div class="rh" style="top:904px;height:14px;line-height:14px">44</div>
<div class="rh" style="top:918px;height:14px;line-height:14px">45</div>
<div class="rh" style="top:932px;height:14px;line-height:14px">46</div>
<div class="rh" style="top:946px;height:14px;line-height:14px">47</div>
<div class="rh" style="top:960px;height:14px;line-height:14px">48</div>
<div class="fill" style="left:19px;top:452px;width:1879px;height:15px;background:#ffff00"></div>
<div class="fill" style="left:19px;top:467px;width:1833px;height:15px;background:#ffc000"></div>
<div class="fill" style="left:19px;top:482px;width:1833px;height:15px;background:#ffc000"></div>
<div class="fill" style="left:19px;top:497px;width:1833px;height:15px;background:#ffc000"></div>
<div class="fill" style="left:19px;top:512px;width:1833px;height:15px;background:#ffc000"></div>
<div class="fill" style="left:19px;top:527px;width:1833px;height:15px;background:#ffc000"></div>
<div class="fill" style="left:19px;top:542px;width:1833px;height:15px;background:#ffc000"></div>
<div class="fill" style="left:19px;top:557px;width:1833px;height:15px;background:#ffc000"></div>
<div class="fill" style="left:19px;top:572px;width:1833px;height:15px;background:#ffc000"></div>
<div class="fill" style="left:19px;top:587px;width:1833px;height:15px;background:#ffc000"></div>
<div class="fill" style="left:19px;top:662px;width:1833px;height:15px;background:#ffc000"></div>
<div class="fill" style="left:19px;top:677px;width:1833px;height:15px;background:#ffc000"></div>
<div class="fill" style="left:19px;top:287px;width:1833px;height:30px;background:#5b9bd5"></div>
<i class="bh" style="left:19px;top:286px;width:1834px"></i>
<i class="bh" style="left:19px;top:316px;width:1834px"></i>
<i class="bh" style="left:19px;top:331px;width:1834px"></i>
<i class="bh" style="left:19px;top:346px;width:1834px"></i>
<i class="bh" style="left:19px;top:361px;width:1834px"></i>
<i class="bh" style="left:19px;top:376px;width:1834px"></i>
<i class="bh" style="left:19px;top:391px;width:1834px"></i>
<i class="bh" style="left:19px;top:406px;width:1834px"></i>
<i class="bh" style="left:19px;top:421px;width:1834px"></i>
<i class="bh" style="left:19px;top:436px;width:1834px"></i>
<i class="bh" style="left:19px;top:451px;width:1834px"></i>
<i class="bh" style="left:19px;top:466px;width:1834px"></i>
<i class="bh" style="left:19px;top:481px;width:1834px"></i>
<i class="bh" style="left:19px;top:496px;width:1834px"></i>
<i class="bh" style="left:19px;top:511px;width:1834px"></i>
<i class="bh" style="left:19px;top:526px;width:1834px"></i>
<i class="bh" style="left:19px;top:541px;width:1834px"></i>
<i class="bh" style="left:19px;top:556px;width:1834px"></i>
<i class="bh" style="left:19px;top:571px;width:1834px"></i>
<i class="bh" style="left:19px;top:586px;width:1834px"></i>
<i class="bh" style="left:19px;top:601px;width:1834px"></i>
<i class="bh" style="left:19px;top:616px;width:1834px"></i>
<i class="bh" style="left:19px;top:631px;width:1834px"></i>
<i class="bh" style="left:19px;top:646px;width:1834px"></i>
<i class="bh" style="left:19px;top:661px;width:1834px"></i>
<i class="bh" style="left:19px;top:676px;width:1834px"></i>
<i class="bh" style="left:19px;top:691px;width:1834px"></i>
<i class="bh" style="left:19px;top:706px;width:1834px"></i>
<i class="bh" style="left:19px;top:721px;width:1834px"></i>
<i class="bh" style="left:175px;top:301px;width:295px"></i>
<i class="bh" style="left:1446px;top:301px;width:331px"></i>
<i class="bv" style="left:88px;top:286px;height:436px"></i>
<i class="bv" style="left:175px;top:286px;height:436px"></i>
<i class="bv" style="left:255px;top:286px;height:436px"></i>
<i class="bv" style="left:470px;top:286px;height:436px"></i>
<i class="bv" style="left:540px;top:286px;height:436px"></i>
<i class="bv" style="left:628px;top:286px;height:436px"></i>
<i class="bv" style="left:738px;top:286px;height:436px"></i>
<i class="bv" style="left:878px;top:286px;height:436px"></i>
<i class="bv" style="left:1018px;top:286px;height:436px"></i>
<i class="bv" style="left:1158px;top:286px;height:436px"></i>
<i class="bv" style="left:1269px;top:286px;height:436px"></i>
<i class="bv" style="left:1351px;top:286px;height:436px"></i>
<i class="bv" style="left:1446px;top:286px;height:436px"></i>
<i class="bv" style="left:1522px;top:301px;height:421px"></i>
<i class="bv" style="left:1589px;top:301px;height:421px"></i>
<i class="bv" style="left:1777px;top:286px;height:436px"></i>
<i class="bv" style="left:1852px;top:286px;height:436px"></i>
<i class="bv" style="left:19px;top:286px;height:436px"></i>
<div class="ht" style="left:19px;top:287px;width:68px;height:29px;line-height:29px;letter-spacing:-0.92px"><span>BULAN</span></div>
<div class="ht" style="left:88px;top:287px;width:86px;height:29px;line-height:29px;letter-spacing:-0.12px"><span>Jumlah Karyawan</span></div>
<div class="ht" style="left:175px;top:287px;width:79px;height:14px;line-height:14px;letter-spacing:-1.05px"><span>GAJI</span></div>
<div class="ht" style="left:175px;top:302px;width:79px;height:14px;line-height:14px;letter-spacing:-0.23px"><span>Pegawai TIM</span></div>
<div class="ht" style="left:255px;top:287px;width:214px;height:14px;line-height:14px;letter-spacing:-0.64px"><span>PPH 21</span></div>
<div class="ht" style="left:255px;top:302px;width:214px;height:14px;line-height:14px;letter-spacing:-0.76px"><span>Pegawai RAR,OS LAIN, TIM, PIM, BTS SALES</span></div>
<div class="ht" style="left:470px;top:287px;width:69px;height:29px;line-height:29px;letter-spacing:-0.21px"><span>Jumlah Karyawan Resign</span></div>
<div class="ht" style="left:540px;top:287px;width:87px;height:29px;line-height:29px;letter-spacing:-0.39px"><span>DPP Karyawan Resign</span></div>
<div class="ht" style="left:628px;top:287px;width:109px;height:29px;line-height:29px;letter-spacing:-0.29px"><span>PPh 21 Karyawan Resign</span></div>
<div class="ht" style="left:738px;top:287px;width:139px;height:29px;line-height:29px;letter-spacing:-0.16px"><span>Jumlah Karyawan NIK Tidak Valid</span></div>
<div class="ht" style="left:878px;top:287px;width:139px;height:29px;line-height:29px;letter-spacing:-0.28px"><span>DPP Karyawan NIK Tidak Valid</span></div>
<div class="ht" style="left:1018px;top:287px;width:139px;height:29px;line-height:29px;letter-spacing:-0.22px"><span>PPh 21 Karyawan NIK Tidak Valid</span></div>
<div class="ht" style="left:1158px;top:287px;width:110px;height:29px;line-height:29px;letter-spacing:-0.3px"><span>Total PPh 21 KB/ (LB)</span></div>
<div class="ht" style="left:1269px;top:287px;width:81px;height:29px;line-height:29px;letter-spacing:-0.38px"><span>Selisih KB / (LB)</span></div>
<div class="ht" style="left:1351px;top:287px;width:94px;height:29px;line-height:29px;letter-spacing:-1.12px"><span>TOTAL SSP</span></div>
<div class="ht" style="left:1446px;top:287px;width:330px;height:14px;line-height:14px;letter-spacing:-1.12px"><span>SSP 1</span></div>
<div class="ht" style="left:1446px;top:302px;width:75px;height:14px;line-height:14px;letter-spacing:0.01px"><span>Nilai</span></div>
<div class="ht l" style="left:1522px;top:302px;width:66px;height:14px;line-height:14px;letter-spacing:-0.95px"><span>TGL BAYAR</span></div>
<div class="ht l" style="left:1589px;top:302px;width:187px;height:14px;line-height:14px;letter-spacing:-0.98px"><span>NTPN</span></div>
<div class="ht" style="left:1777px;top:287px;width:74px;height:29px;line-height:29px;letter-spacing:-0.49px"><span>TGL Lapor</span></div>
<div class="refcell" style="left:1268px;top:420px;width:85px;height:17px"></div>
<i class="rhd" style="left:1267px;top:419px"></i>
<i class="rhd" style="left:1350px;top:419px"></i>
<i class="rhd" style="left:1267px;top:434px"></i>
<i class="rhd" style="left:1350px;top:434px"></i>
<div class="ct l" style="left:22px;top:317px;width:65px;letter-spacing:-0.14px">Januari</div>
<div class="ct r" style="left:175px;top:317px;width:78px;letter-spacing:0.04px">154.005.256</div>
<div class="ct r" style="left:255px;top:317px;width:213px;letter-spacing:0.05px">13.823</div>
<div class="ct r" style="left:1158px;top:317px;width:105.5px;letter-spacing:0.05px">13.823</div>
<div class="ct r" style="left:1269px;top:317px;width:77.5px;letter-spacing:-0.04px">-</div>
<div class="ct r" style="left:1351px;top:317px;width:89.5px;letter-spacing:0.05px">13.823</div>
<div class="ct r" style="left:1446px;top:317px;width:70.5px;letter-spacing:0.05px">13.823</div>
<div class="ct r ar" style="left:1522px;top:317px;width:65px">20/02/2025</div>
<div class="ct l ar" style="left:1592px;top:317px;width:184px;letter-spacing:-0.06px">KET-00530/PBK-CT/KPP.0616/2025</div>
<div class="ct r ar" style="left:1777px;top:317px;width:73px">20/02/2025</div>
<div class="ct l" style="left:22px;top:332px;width:65px;letter-spacing:-0.23px">Januari-P1</div>
<div class="ct r" style="left:88px;top:332px;width:85px;letter-spacing:0.03px">31,00</div>
<div class="ct r" style="left:175px;top:332px;width:78px;letter-spacing:0.04px">104.773.655</div>
<div class="ct r" style="left:255px;top:332px;width:213px;letter-spacing:0.05px">13.823</div>
<div class="ct r" style="left:470px;top:332px;width:68px;letter-spacing:0.16px">10</div>
<div class="ct r" style="left:540px;top:332px;width:86px;letter-spacing:0.03px">33.853.363</div>
<div class="ct r" style="left:628px;top:332px;width:108px;letter-spacing:0.16px">0</div>
<div class="ct r" style="left:738px;top:332px;width:138px;letter-spacing:0.16px">0</div>
<div class="ct r" style="left:878px;top:332px;width:138px;letter-spacing:0.16px">0</div>
<div class="ct r" style="left:1018px;top:332px;width:138px;letter-spacing:0.16px">0</div>
<div class="ct r" style="left:1158px;top:332px;width:105.5px;letter-spacing:0.05px">13.823</div>
<div class="ct r" style="left:1269px;top:332px;width:77.5px;letter-spacing:-0.04px">-</div>
<div class="ct r" style="left:1351px;top:332px;width:89.5px;letter-spacing:0.05px">13.823</div>
<div class="ct r" style="left:1446px;top:332px;width:70.5px;letter-spacing:0.05px">13.823</div>
<div class="ct r ar" style="left:1522px;top:332px;width:65px">20/02/2025</div>
<div class="ct l ar" style="left:1592px;top:332px;width:184px;letter-spacing:-0.06px">KET-00530/PBK-CT/KPP.0616/2025</div>
<div class="ct r ar" style="left:1777px;top:332px;width:73px">22/01/2026</div>
<div class="ct l" style="left:22px;top:347px;width:65px;letter-spacing:0.01px">Februari</div>
<div class="ct r" style="left:175px;top:347px;width:78px;letter-spacing:0.04px">153.612.199</div>
<div class="ct r" style="left:255px;top:347px;width:213px;letter-spacing:0.05px">87.864</div>
<div class="ct r" style="left:1158px;top:347px;width:105.5px;letter-spacing:0.05px">87.864</div>
<div class="ct r" style="left:1269px;top:347px;width:77.5px;letter-spacing:-0.04px">-</div>
<div class="ct r" style="left:1351px;top:347px;width:89.5px;letter-spacing:0.05px">87.864</div>
<div class="ct r" style="left:1446px;top:347px;width:70.5px;letter-spacing:0.05px">87.864</div>
<div class="ct r ar" style="left:1522px;top:347px;width:65px">14/03/2025</div>
<div class="ct l ar" style="left:1592px;top:347px;width:184px;letter-spacing:-0.14px">KET-01490/PBK-CT/KPP.0616/2025</div>
<div class="ct r ar" style="left:1777px;top:347px;width:73px">22/03/2025</div>
<div class="ct l" style="left:22px;top:362px;width:65px;letter-spacing:-0.11px">Februari-P1</div>
<div class="ct r" style="left:88px;top:362px;width:85px;letter-spacing:0.03px">29,00</div>
<div class="ct r" style="left:175px;top:362px;width:78px;letter-spacing:0.04px">102.740.588</div>
<div class="ct r" style="left:255px;top:362px;width:213px;letter-spacing:0.05px">87.864</div>
<div class="ct r" style="left:470px;top:362px;width:68px;letter-spacing:0.16px">10</div>
<div class="ct r" style="left:540px;top:362px;width:86px;letter-spacing:0.03px">78.913.822</div>
<div class="ct r" style="left:628px;top:362px;width:108px;letter-spacing:0.16px">0</div>
<div class="ct r" style="left:738px;top:362px;width:138px;letter-spacing:0.16px">1</div>
<div class="ct r" style="left:878px;top:362px;width:138px;letter-spacing:0.1px">3.861.110</div>
<div class="ct r" style="left:1018px;top:362px;width:138px;letter-spacing:0.16px">0</div>
<div class="ct r" style="left:1158px;top:362px;width:105.5px;letter-spacing:0.05px">87.864</div>
<div class="ct r" style="left:1269px;top:362px;width:77.5px;letter-spacing:-0.04px">-</div>
<div class="ct r" style="left:1351px;top:362px;width:89.5px;letter-spacing:0.05px">87.864</div>
<div class="ct r" style="left:1446px;top:362px;width:70.5px;letter-spacing:0.05px">87.864</div>
<div class="ct r ar" style="left:1522px;top:362px;width:65px">14/03/2025</div>
<div class="ct l ar" style="left:1592px;top:362px;width:184px;letter-spacing:-0.14px">KET-01490/PBK-CT/KPP.0616/2025</div>
<div class="ct r ar" style="left:1777px;top:362px;width:73px">31/01/2026</div>
<div class="ct l" style="left:22px;top:377px;width:65px;letter-spacing:0.32px">Maret</div>
<div class="ct r" style="left:175px;top:377px;width:78px;letter-spacing:0.04px">168.703.698</div>
<div class="ct r" style="left:255px;top:377px;width:213px;letter-spacing:0.06px">741.272</div>
<div class="ct r" style="left:1158px;top:377px;width:105.5px;letter-spacing:0.06px">741.272</div>
<div class="ct r" style="left:1269px;top:377px;width:77.5px;letter-spacing:-0.04px">-</div>
<div class="ct r" style="left:1351px;top:377px;width:89.5px;letter-spacing:0.06px">741.272</div>
<div class="ct r" style="left:1446px;top:377px;width:70.5px;letter-spacing:0.06px">741.272</div>
<div class="ct r ar" style="left:1522px;top:377px;width:65px">15/04/2025</div>
<div class="ct l ar" style="left:1592px;top:377px;width:184px;letter-spacing:-0.38px">AD8723IR22NKGTDJ</div>
<div class="ct r ar" style="left:1777px;top:377px;width:73px">15/04/2025</div>
<div class="ct l" style="left:22px;top:392px;width:65px;letter-spacing:0.04px">Maret-P1</div>
<div class="ct r" style="left:88px;top:392px;width:85px;letter-spacing:0.03px">29,00</div>
<div class="ct r" style="left:175px;top:392px;width:78px;letter-spacing:0.11px">159.668.711</div>
<div class="ct r" style="left:255px;top:392px;width:213px;letter-spacing:0.06px">842.959</div>
<div class="ct r" style="left:470px;top:392px;width:68px;letter-spacing:0.55px">11</div>
<div class="ct r" style="left:540px;top:392px;width:86px;letter-spacing:0.03px">79.280.041</div>
<div class="ct r" style="left:628px;top:392px;width:108px;letter-spacing:0.05px">-101.687</div>
<div class="ct r" style="left:738px;top:392px;width:138px;letter-spacing:0.16px">0</div>
<div class="ct r" style="left:878px;top:392px;width:138px;letter-spacing:0.16px">0</div>
<div class="ct r" style="left:1018px;top:392px;width:138px;letter-spacing:0.16px">0</div>
<div class="ct r" style="left:1158px;top:392px;width:105.5px;letter-spacing:0.06px">741.272</div>
<div class="ct r" style="left:1351px;top:392px;width:89.5px;letter-spacing:0.06px">741.272</div>
<div class="ct r" style="left:1446px;top:392px;width:70.5px;letter-spacing:0.06px">741.272</div>
<div class="ct r ar" style="left:1522px;top:392px;width:65px">15/04/2025</div>
<div class="ct l ar" style="left:1592px;top:392px;width:184px;letter-spacing:-0.38px">AD8723IR22NKGTDJ</div>
<div class="ct r ar" style="left:1777px;top:392px;width:73px">31/01/2026</div>
<div class="ct l" style="left:22px;top:407px;width:65px;letter-spacing:-1.1px">APRIL</div>
<div class="ct r" style="left:175px;top:407px;width:78px;letter-spacing:0.04px">171.994.017</div>
<div class="ct r" style="left:255px;top:407px;width:213px;letter-spacing:0.05px">-126.162</div>
<div class="ct r" style="left:1158px;top:407px;width:109px;letter-spacing:0.03px">(126.162)</div>
<div class="ct r" style="left:1269px;top:407px;width:80.5px;letter-spacing:0.03px">(126.162)</div>
<div class="ct r" style="left:1351px;top:407px;width:90.5px;letter-spacing:-0.04px">-</div>
<div class="ct r ar" style="left:1777px;top:407px;width:73px">19/05/2025</div>
<div class="ct l" style="left:22px;top:422px;width:65px;letter-spacing:-0.08px">April-P1</div>
<div class="ct r" style="left:88px;top:422px;width:85px;letter-spacing:0.03px">32,00</div>
<div class="ct r" style="left:175px;top:422px;width:78px;letter-spacing:0.04px">137.121.460</div>
<div class="ct r" style="left:255px;top:422px;width:213px;letter-spacing:0.05px">78.082</div>
<div class="ct r" style="left:470px;top:422px;width:68px;letter-spacing:0.55px">11</div>
<div class="ct r" style="left:540px;top:422px;width:86px;letter-spacing:0.03px">98.838.364</div>
<div class="ct r" style="left:628px;top:422px;width:108px;letter-spacing:0.05px">-264.340</div>
<div class="ct r" style="left:738px;top:422px;width:138px;letter-spacing:0.16px">0</div>
<div class="ct r" style="left:878px;top:422px;width:138px;letter-spacing:0.16px">0</div>
<div class="ct r" style="left:1018px;top:422px;width:138px;letter-spacing:0.16px">0</div>
<div class="ct r" style="left:1158px;top:422px;width:109px;letter-spacing:0.03px">(186.258)</div>
<div class="ct r" style="left:1269px;top:422px;width:80.5px;letter-spacing:0.02px">(60.096)</div>
<div class="ct r" style="left:1351px;top:422px;width:90.5px;letter-spacing:-0.04px">-</div>
<div class="ct r ar" style="left:1777px;top:422px;width:73px">31/01/2026</div>
<div class="ct l" style="left:22px;top:437px;width:65px;letter-spacing:-0.51px">MEI</div>
<div class="ct r" style="left:175px;top:437px;width:78px;letter-spacing:0.04px">239.250.372</div>
<div class="ct r" style="left:255px;top:437px;width:213px;letter-spacing:0.06px">193.038</div>
<div class="ct r" style="left:1158px;top:437px;width:105.5px;letter-spacing:0.06px">193.038</div>
<div class="ct r" style="left:1269px;top:437px;width:80.5px;letter-spacing:0.03px">(126.162)</div>
<div class="ct r" style="left:1351px;top:437px;width:89.5px;letter-spacing:0.06px">193.038</div>
<div class="ct r" style="left:1446px;top:437px;width:70.5px;letter-spacing:0.05px">66.876</div>
<div class="ct r ar" style="left:1522px;top:437px;width:65px">13/06/2025</div>
<div class="ct l ar" style="left:1592px;top:437px;width:184px;letter-spacing:-0.26px">2FF6A683N6I3P3FJ</div>
<div class="ct r ar" style="left:1777px;top:437px;width:73px">13/06/2025</div>
<div class="ct l" style="left:22px;top:452px;width:65px;letter-spacing:-0.1px">Mei-P1</div>
<div class="ct r" style="left:88px;top:452px;width:85px;letter-spacing:0.03px">38,00</div>
<div class="ct r" style="left:175px;top:452px;width:78px;letter-spacing:0.04px">166.370.660</div>
<div class="ct r" style="left:255px;top:452px;width:213px;letter-spacing:0.06px">121.687</div>
<div class="ct r" style="left:470px;top:452px;width:68px;letter-spacing:0.16px">17</div>
<div class="ct r" style="left:540px;top:452px;width:86px;letter-spacing:0.04px">163.154.942</div>
<div class="ct r" style="left:628px;top:452px;width:108px;letter-spacing:0.05px">-183.794</div>
<div class="ct r" style="left:738px;top:452px;width:138px;letter-spacing:0.16px">0</div>
<div class="ct r" style="left:878px;top:452px;width:138px;letter-spacing:0.16px">0</div>
<div class="ct r" style="left:1018px;top:452px;width:138px;letter-spacing:0.16px">0</div>
<div class="ct r" style="left:1158px;top:452px;width:109px;letter-spacing:0.03px">(188.269)</div>
<div class="ct l" style="left:22px;top:467px;width:65px;letter-spacing:-0.84px">JUNI</div>
<div class="ct r" style="left:175px;top:467px;width:78px;letter-spacing:0.04px">281.845.898</div>
<div class="ct r" style="left:255px;top:467px;width:213px;letter-spacing:0.06px">547.022</div>
<div class="ct r" style="left:1158px;top:467px;width:105.5px;letter-spacing:0.06px">547.022</div>
<div class="ct r" style="left:1269px;top:467px;width:77.5px;letter-spacing:-0.04px">-</div>
<div class="ct r" style="left:1351px;top:467px;width:89.5px;letter-spacing:0.06px">547.022</div>
<div class="ct r" style="left:1446px;top:467px;width:70.5px;letter-spacing:0.06px">547.022</div>
<div class="ct r ar" style="left:1522px;top:467px;width:65px">15/07/2025</div>
<div class="ct l ar" style="left:1592px;top:467px;width:184px;letter-spacing:-0.43px">B4CAE015AO2FJS2V</div>
<div class="ct r ar" style="left:1777px;top:467px;width:73px">15/07/2025</div>
<div class="ct l" style="left:91px;top:482px;width:83px;letter-spacing:-0.19px">masa</div>
<div class="ct r" style="left:175px;top:482px;width:78px;letter-spacing:0.04px">279.270.047</div>
<div class="ct r" style="left:255px;top:482px;width:213px;letter-spacing:0.06px">547.022</div>
<div class="ct l" style="left:91px;top:497px;width:83px;letter-spacing:-0.06px">a1</div>
<div class="ct r" style="left:175px;top:497px;width:78px;letter-spacing:0.01px">2.575.856</div>
<div class="ct r" style="left:255px;top:497px;width:213px;letter-spacing:0.16px">0</div>
<div class="ct l" style="left:22px;top:512px;width:65px;letter-spacing:-1.01px">JULI</div>
<div class="ct r" style="left:175px;top:512px;width:78px;letter-spacing:0.04px">273.209.284</div>
<div class="ct r" style="left:255px;top:512px;width:213px;letter-spacing:0.06px">516.693</div>
<div class="ct r" style="left:1158px;top:512px;width:105.5px;letter-spacing:0.06px">516.693</div>
<div class="ct r" style="left:1269px;top:512px;width:77.5px;letter-spacing:-0.04px">-</div>
<div class="ct r" style="left:1351px;top:512px;width:89.5px;letter-spacing:0.06px">516.693</div>
<div class="ct r" style="left:1446px;top:512px;width:70.5px;letter-spacing:0.06px">516.693</div>
<div class="ct r ar" style="left:1522px;top:512px;width:65px">15/08/2025</div>
<div class="ct l ar" style="left:1592px;top:512px;width:184px;letter-spacing:-0.5px">5DB3C2MDTCLMSUH8</div>
<div class="ct r ar" style="left:1777px;top:512px;width:73px">15/08/2025</div>
<div class="ct l" style="left:91px;top:527px;width:83px;letter-spacing:-0.19px">masa</div>
<div class="ct r" style="left:175px;top:527px;width:78px;letter-spacing:0.04px">195.706.912</div>
<div class="ct r" style="left:255px;top:527px;width:213px;letter-spacing:0.06px">512.876</div>
<div class="ct l" style="left:91px;top:542px;width:83px;letter-spacing:-0.06px">a1</div>
<div class="ct r" style="left:175px;top:542px;width:78px;letter-spacing:0.03px">77.502.372</div>
<div class="ct r" style="left:255px;top:542px;width:213px;letter-spacing:0.06px">143.436</div>
<div class="ct l" style="left:22px;top:557px;width:65px;letter-spacing:-1.26px">AGUSTUS</div>
<div class="ct r" style="left:175px;top:557px;width:78px;letter-spacing:0.04px">207.200.305</div>
<div class="ct r" style="left:255px;top:557px;width:213px;letter-spacing:0.06px">326.734</div>
<div class="ct r" style="left:1158px;top:557px;width:105.5px;letter-spacing:0.06px">326.734</div>
<div class="ct r" style="left:1269px;top:557px;width:80.5px;letter-spacing:0.01px">(0)</div>
<div class="ct r" style="left:1351px;top:557px;width:89.5px;letter-spacing:0.06px">326.734</div>
<div class="ct r ar" style="left:1446px;top:557px;width:70.5px">326.734</div>
<div class="ct r ar" style="left:1522px;top:557px;width:65px">15/09/2025</div>
<div class="ct l ar" style="left:1592px;top:557px;width:184px;letter-spacing:-0.42px">4B5D55BME2BMADPU</div>
<div class="ct r ar" style="left:1777px;top:557px;width:73px">15/09/2025</div>
<div class="ct l" style="left:91px;top:572px;width:83px;letter-spacing:-0.19px">masa</div>
<div class="ct r" style="left:175px;top:572px;width:78px;letter-spacing:0.04px">196.401.821</div>
<div class="ct r" style="left:255px;top:572px;width:213px;letter-spacing:0.06px">684.669</div>
<div class="ct l" style="left:91px;top:587px;width:83px;letter-spacing:-0.06px">a1</div>
<div class="ct r" style="left:175px;top:587px;width:78px;letter-spacing:0.03px">10.798.484</div>
<div class="ct r" style="left:255px;top:587px;width:213px;letter-spacing:0.16px">0</div>
<div class="ct l" style="left:22px;top:602px;width:65px;letter-spacing:-1.38px">SEPTEMBER</div>
<div class="ct r" style="left:175px;top:602px;width:78px;letter-spacing:0.04px">201.454.109</div>
<div class="ct r" style="left:255px;top:602px;width:213px;letter-spacing:0.06px">265.628</div>
<div class="ct r" style="left:1158px;top:602px;width:105.5px;letter-spacing:0.06px">265.628</div>
<div class="ct r" style="left:1269px;top:602px;width:77.5px;letter-spacing:-0.04px">-</div>
<div class="ct r" style="left:1351px;top:602px;width:89.5px;letter-spacing:0.06px">265.628</div>
<div class="ct r ar" style="left:1446px;top:602px;width:70.5px">265.628</div>
<div class="ct r ar" style="left:1522px;top:602px;width:65px">15/10/2025</div>
<div class="ct l ar" style="left:1592px;top:602px;width:184px;letter-spacing:-0.49px">A61BA4F92F0RG16N</div>
<div class="ct r ar" style="left:1777px;top:602px;width:73px">15/10/2025</div>
<div class="ct l" style="left:22px;top:647px;width:65px;letter-spacing:-1.31px">OKTOBER</div>
<div class="ct r" style="left:175px;top:647px;width:78px;letter-spacing:0.04px">339.870.270</div>
<div class="ct r" style="left:255px;top:647px;width:213px;letter-spacing:0.06px">121.939</div>
<div class="ct r" style="left:1158px;top:647px;width:105.5px;letter-spacing:0.06px">121.939</div>
<div class="ct r" style="left:1269px;top:647px;width:77.5px;letter-spacing:-0.04px">-</div>
<div class="ct r" style="left:1351px;top:647px;width:89.5px;letter-spacing:0.06px">121.939</div>
<div class="ct r ar" style="left:1446px;top:647px;width:70.5px">121.939</div>
<div class="ct r ar" style="left:1522px;top:647px;width:65px">14/11/2025</div>
<div class="ct l ar" style="left:1592px;top:647px;width:184px;letter-spacing:0.26px">883e7f5b-0e2f-4568-8cfc-753bd94fb0</div>
<div class="ct r ar" style="left:1777px;top:647px;width:73px">14/11/2025</div>
<div class="ct l" style="left:91px;top:662px;width:83px;letter-spacing:-0.19px">masa</div>
<div class="ct l" style="left:91px;top:677px;width:83px;letter-spacing:-0.06px">a1</div>
<div class="ct l" style="left:22px;top:692px;width:65px;letter-spacing:-1.07px">NOVEMBER</div>
<div class="ct r" style="left:175px;top:692px;width:78px;letter-spacing:0.16px">0</div>
<div class="ct r" style="left:255px;top:692px;width:213px;letter-spacing:0.16px">0</div>
<div class="ct r" style="left:1158px;top:692px;width:106.5px;letter-spacing:-0.04px">-</div>
<div class="ct r" style="left:1269px;top:692px;width:77.5px;letter-spacing:-0.04px">-</div>
<div class="ct r" style="left:1351px;top:692px;width:90.5px;letter-spacing:-0.04px">-</div>
<div class="ct l" style="left:22px;top:707px;width:65px;letter-spacing:-1.35px">DESEMBER</div>
<div class="ct r" style="left:175px;top:707px;width:78px;letter-spacing:0.16px">0</div>
<div class="ct r" style="left:255px;top:707px;width:213px;letter-spacing:0.16px">0</div>
<div class="ct r" style="left:1158px;top:707px;width:106.5px;letter-spacing:-0.04px">-</div>
<div class="ct r" style="left:1269px;top:707px;width:77.5px;letter-spacing:-0.04px">-</div>
<div class="ct r" style="left:1351px;top:707px;width:90.5px;letter-spacing:-0.04px">-</div>
<div class="editcell" style="left:1268px;top:451px;width:85px;height:17px"><span class="eq">=</span><span class="ref">M11</span><i class="caret"></i></div>
<i class="fillh" style="left:1350px;top:465px"></i>
</div><div id="sheettabs">
<div style="left:0px;top:978px;width:1920px;height:32px;background:#0e0c0c"></div>
<div style="left:1898px;top:258px;width:22px;height:720px;background:#0e0c0c"></div>
<svg style="left:1904px;top:262px;" width="12" height="9" viewBox="0 0 12 9" fill="none"><path d="M6 1L11 8H1z" fill="#9a9a9a"/></svg>
<div style="left:1905px;top:275px;width:9px;height:672px;background:#9b9b9b;border-radius:5px"></div>
<svg style="left:1904px;top:966px;" width="12" height="9" viewBox="0 0 12 9" fill="none"><path d="M1 1h10L6 8z" fill="#9a9a9a"/></svg>
<svg style="left:26px;top:988px;" width="12" height="12" viewBox="0 0 12 12" fill="none"><path d="M8 1.5L3.5 6 8 10.5" stroke="#6a6a6a" stroke-width="1.3"/></svg>
<svg style="left:58px;top:988px;" width="12" height="12" viewBox="0 0 12 12" fill="none"><path d="M4 1.5L8.5 6 4 10.5" stroke="#c8c8c8" stroke-width="1.3"/></svg>
<div style="left:116px;top:978px;width:60px;height:28px;background:linear-gradient(#ffffff,#fdebb8);border-radius:0 0 5px 5px"></div>
<div class="t" style="left:124px;top:985.2px;font-size:13.5px;color:#3a3a3a;letter-spacing:-0.42px;">PPH 21</div>
<div style="left:124px;top:1001px;width:44px;height:2px;background:#2e8b3d"></div>
<div class="t" style="left:194px;top:987.0px;font-size:14px;color:#f5f5f5;letter-spacing:-0.19px;">Karyawan Tetap</div>
<div class="t" style="left:319.5px;top:987.0px;font-size:14px;color:#f5f5f5;letter-spacing:-0.28px;">A1-Karyawan Resign</div>
<div class="t" style="left:475px;top:987.0px;font-size:14px;color:#f5f5f5;letter-spacing:-0.18px;">Karyawan NIK Tidak Valid</div>
<div class="t" style="left:660px;top:987.0px;font-size:14px;color:#f5f5f5;letter-spacing:-1.1px;">PPN</div>
<div class="t" style="left:711.5px;top:987.0px;font-size:14px;color:#f5f5f5;letter-spacing:-0.31px;">A2</div>
<div class="t" style="left:756px;top:987.0px;font-size:14px;color:#f5f5f5;letter-spacing:-0.75px;">PREPAID PPH 23</div>
<div style="left:180px;top:985px;width:1px;height:18px;background:#4a4a4a"></div>
<div style="left:306px;top:985px;width:1px;height:18px;background:#4a4a4a"></div>
<div style="left:459px;top:985px;width:1px;height:18px;background:#4a4a4a"></div>
<div style="left:646px;top:985px;width:1px;height:18px;background:#4a4a4a"></div>
<div style="left:699px;top:985px;width:1px;height:18px;background:#4a4a4a"></div>
<div style="left:741px;top:985px;width:1px;height:18px;background:#4a4a4a"></div>
<div style="left:872px;top:985px;width:1px;height:18px;background:#4a4a4a"></div>
<div style="left:893px;top:993px;width:2.5px;height:2.5px;background:#e0e0e0"></div>
<div style="left:896.5px;top:993px;width:2.5px;height:2.5px;background:#e0e0e0"></div>
<div style="left:900px;top:993px;width:2.5px;height:2.5px;background:#e0e0e0"></div>
<svg style="left:924px;top:988px;" width="12" height="12" viewBox="0 0 12 12" fill="none"><path d="M6 0.5v11M0.5 6h11" stroke="#e0e0e0" stroke-width="1.2"/></svg>
<div style="left:961.5px;top:989px;width:2px;height:2px;background:#d0d0d0;border-radius:1px"></div>
<div style="left:961.5px;top:993.5px;width:2px;height:2px;background:#d0d0d0;border-radius:1px"></div>
<div style="left:961.5px;top:998px;width:2px;height:2px;background:#d0d0d0;border-radius:1px"></div>
<svg style="left:983px;top:989px;" width="9" height="10" viewBox="0 0 9 10" fill="none"><path d="M8 0.5v9L1 5z" fill="#b0b0b0"/></svg>
<div style="left:1032px;top:989px;width:852px;height:9px;background:#9b9b9b;border-radius:5px"></div>
<svg style="left:1888px;top:989px;" width="9" height="10" viewBox="0 0 9 10" fill="none"><path d="M1 0.5v9L8 5z" fill="#b0b0b0"/></svg>
</div>
<div id="statusbar">
<div style="left:0px;top:1010px;width:1920px;height:22px;background:#181818;border-top:1px solid #2c2c2c"></div>
<div class="t" style="left:12px;top:1014.5px;font-size:12px;color:#f0f0f0;letter-spacing:-0.17px;">Edit</div>
<div class="t" style="left:58px;top:1015.5px;font-size:12px;color:#f0f0f0;letter-spacing:-0.34px;">Calculate</div>
<svg style="left:124px;top:1013px;" width="16" height="16" viewBox="0 0 16 16" fill="none"><circle cx="7" cy="3" r="1.6" stroke="#e8e8e8" stroke-width="1"/><path d="M1.5 5.5c2 .8 3.5 1 5.5 1s3.5-.2 5.5-1M5 6.5v3l-2 5M9 6.5v3l1 2" stroke="#e8e8e8" stroke-width="1.1"/><path d="M9.5 10.5l4.5 4.5M14 10.5l-4.5 4.5" stroke="#e8e8e8" stroke-width="1.1"/></svg>
<div class="t" style="left:143px;top:1014.5px;font-size:12px;color:#f5f5f5;letter-spacing:-0.67px;font-weight:bold;">Accessibility: Investigate</div>
<svg style="left:1632px;top:1014px;" width="15" height="14" viewBox="0 0 15 14" fill="none"><rect x="1" y="1" width="12" height="12" stroke="#6a6a6a" stroke-width="1"/><path d="M1 5h12M1 9h12M5 1v12M9 1v12" stroke="#6a6a6a" stroke-width="1"/></svg>
<svg style="left:1672px;top:1014px;" width="15" height="14" viewBox="0 0 15 14" fill="none"><rect x="1" y="1" width="13" height="12" stroke="#6a6a6a" stroke-width="1"/><rect x="4" y="3.5" width="7" height="7" stroke="#6a6a6a" stroke-width="1"/><path d="M5.5 6h4M5.5 8h4" stroke="#6a6a6a" stroke-width=".8"/></svg>
<svg style="left:1712px;top:1014px;" width="15" height="14" viewBox="0 0 15 14" fill="none"><rect x="1" y="1" width="13" height="12" stroke="#6a6a6a" stroke-width="1"/><path d="M5 1v5h5V1" stroke="#6a6a6a" stroke-width="1"/></svg>
<div style="left:1745px;top:1021px;width:8px;height:1px;background:#5a5a5a"></div>
<div style="left:1759px;top:1021px;width:100px;height:1px;background:#c8c8c8"></div>
<div style="left:1809px;top:1018px;width:1px;height:7px;background:#c8c8c8"></div>
<svg style="left:1864px;top:1017px;" width="9" height="9" viewBox="0 0 9 9" fill="none"><path d="M4.5 0.5v8M0.5 4.5h8" stroke="#5a5a5a" stroke-width="1"/></svg>
<div class="t" style="left:1885px;top:1015.5px;font-size:12px;color:#5c5c5c;letter-spacing:-1.01px;">70%</div>
</div><div id="taskbar">
<div style="left:0px;top:1032px;width:1920px;height:48px;background:linear-gradient(90deg,#1f1c1c 0%,#251f1e 30%,#2a2220 60%,#242023 68%,#1c1f25 75%,#1d2127 85%,#2b261f 93%,#3c2f1c 100%);border-top:1px solid #393534"></div>
<svg style="left:17px;top:1042px;" width="30" height="22" viewBox="0 0 30 22" fill="none"><defs><linearGradient id="cl" x1="0" y1="0" x2="0" y2="1"><stop offset="0" stop-color="#e8f1ff"/><stop offset="1" stop-color="#8fb6ee"/></linearGradient></defs><path d="M7 19a5 5 0 01-.5-10 7 7 0 0113-1.5 5.5 5.5 0 012 11.500z" fill="url(#cl)"/></svg>
<div style="left:31px;top:1040px;width:14px;height:14px;background:#f28b93;border-radius:7px"></div>
<div class="t" style="left:35px;top:1042.0px;font-size:11px;color:#3a1014;letter-spacing:-0.12px;">4</div>
<div class="t" style="left:50.5px;top:1041.8px;font-size:12.5px;color:#f5f5f5;letter-spacing:-0.73px;">29°C</div>
<div class="t" style="left:50.5px;top:1058.2px;font-size:12.5px;color:#cfcfcf;letter-spacing:-0.62px;">Berawan</div>
<svg style="left:616px;top:1044px;" width="25" height="25" viewBox="0 0 25 25" fill="none"><defs><linearGradient id="wg" x1="0" y1="0" x2="1" y2="1"><stop offset="0" stop-color="#6fd3ff"/><stop offset="1" stop-color="#1492e6"/></linearGradient></defs><rect x="0.5" y="0.5" width="11.3" height="11.3" rx="1" fill="url(#wg)"/><rect x="12.8" y="0.5" width="11.3" height="11.3" rx="1" fill="url(#wg)"/><rect x="0.5" y="12.8" width="11.3" height="11.3" rx="1" fill="url(#wg)"/><rect x="12.8" y="12.8" width="11.3" height="11.3" rx="1" fill="url(#wg)"/></svg>
<div style="left:653px;top:1039px;width:220px;height:33px;background:linear-gradient(90deg,#3a3534,#423c3a 60%,#3e3836);border:1px solid #4a4442;border-radius:17px"></div>
<svg style="left:664px;top:1047px;" width="18" height="18" viewBox="0 0 18 18" fill="none"><circle cx="7.5" cy="7.5" r="5.5" stroke="#ececec" stroke-width="1.8"/><path d="M11.5 11.500l4 4" stroke="#ececec" stroke-width="2.2" stroke-linecap="round"/></svg>
<div class="t" style="left:690px;top:1049.2px;font-size:14.5px;color:#ececec;letter-spacing:-0.82px;">Search</div>
<svg style="left:823px;top:1042px;" width="46" height="28" viewBox="0 0 46 28" fill="none"><ellipse cx="24" cy="24.5" rx="21" ry="2.8" fill="#e8cfa6"/><path d="M12 8l-6 5 1.5 2 5-1.500v3.500l2 1V23.500h2V19h9v4.500h2V19l2-1.5-.5-6.500c-3-1.5-9-1-12 0L15 7l-1-2z" fill="#b9a7d6"/><path d="M16 11v7M19.5 11v7.500M23 11v7.500M26.5 11v7M13 6l3 4" stroke="#5b4a86" stroke-width="1.2"/><path d="M31 12c2 1 2 4 1.5 6" stroke="#5b4a86" stroke-width="1"/></svg>
<svg style="left:885px;top:1044px;" width="26" height="26" viewBox="0 0 26 26" fill="none"><rect x="1" y="8" width="16" height="15" rx="1.5" fill="#7d7d7d"/><rect x="7" y="2" width="17" height="15" rx="1.5" fill="#f1f1f1"/><rect x="7" y="8" width="10" height="9" fill="#b5b5b5"/></svg>
<svg style="left:928px;top:1043px;" width="27" height="26" viewBox="0 0 27 26" fill="none"><path d="M1 4a1.5 1.5 0 011.5-1.500h7l2.5 3h12a1.5 1.5 0 011.5 1.500V21a1.5 1.5 0 01-1.5 1.500h-21.500A1.5 1.5 0 011 21z" fill="#f7c331"/><path d="M1 4a1.5 1.5 0 011.5-1.500h7l2.5 3H1z" fill="#d99e12"/><path d="M1 9h24.500v12a1.5 1.5 0 01-1.5 1.500h-21.500A1.5 1.5 0 011 21z" fill="#ffd75c"/><rect x="6" y="16" width="14" height="8" rx="1.5" fill="#1e88e5"/><rect x="9" y="18.5" width="8" height="2" fill="#0d5cab"/></svg>
<div style="left:938px;top:1073px;width:6px;height:3px;background:#8c8c8c;border-radius:2px"></div>
<svg style="left:972px;top:1043px;" width="26" height="26" viewBox="0 0 26 26" fill="none"><defs><linearGradient id="eg" x1="0" y1="0" x2="1" y2="1"><stop offset="0" stop-color="#35c1f1"/><stop offset="1" stop-color="#0c59a4"/></linearGradient><linearGradient id="eg2" x1="0" y1="0" x2="1" y2="0"><stop offset="0" stop-color="#4fd66a"/><stop offset="1" stop-color="#2cc3d4"/></linearGradient></defs><circle cx="13" cy="13" r="12" fill="url(#eg)"/><path d="M2 10C4 3 11 0 17 2.500c5 2 8 6.5 7.5 11-1 3-5 4-8 2.5 2-1 2.5-3.5 1-5.500C15 7 8 7 2 10z" fill="url(#eg2)"/><path d="M9 13c-1 4 2 9 8 10-6 2.5-13-1-14.5-8 1-3 4-4 6.5-2z" fill="#0b4f9a"/><circle cx="13" cy="14.5" r="3.2" fill="#1d1b1b"/></svg>
<svg style="left:1016px;top:1042px;" width="26" height="28" viewBox="0 0 26 28" fill="none"><path d="M8 7V4.500a2.5 2.5 0 012.5-2.500h5a2.5 2.5 0 012.5 2.500V7" stroke="#3aa0f2" stroke-width="2"/><path d="M1.5 7h23v15a3 3 0 01-3 3h-17a3 3 0 01-3-3z" fill="#f3f3f3"/><rect x="8" y="10.5" width="4.5" height="4.5" fill="#f25022"/><rect x="13.5" y="10.5" width="4.5" height="4.5" fill="#7fba00"/><rect x="8" y="16" width="4.5" height="4.5" fill="#00a4ef"/><rect x="13.5" y="16" width="4.5" height="4.5" fill="#ffb900"/></svg>
<svg style="left:1060px;top:1043px;" width="26" height="26" viewBox="0 0 26 26" fill="none"><path d="M13 2.500a10.5 10.5 0 00-9 16L2.5 23.500l5.2-1.400A10.5 10.5 0 1013 2.500z" stroke="#25d366" stroke-width="2.4" fill="#1a2a20"/><path d="M9.5 8.500c.5-.5 1.2-.3 1.5.300l.7 1.600c.2.5 0 .9-.4 1.3-.3.3-.3.6 0 1 .8 1.1 1.8 2 3 2.5.4.2.7.1 1-.2.4-.5.8-.7 1.3-.400l1.5.800c.6.3.7 1 .2 1.5-1 1.2-2.6 1.3-4.2.7-2.6-1-4.7-3.1-5.5-5.5-.4-1.4-.1-2.7.9-3.600z" fill="#25d366"/></svg>
<div style="left:1097px;top:1036px;width:40px;height:40px;background:rgba(255,255,255,.025);border-radius:4px"></div>
<svg style="left:1104px;top:1043px;" width="26" height="26" viewBox="0 0 26 26" fill="none"><circle cx="13" cy="13" r="12" fill="#fff"/><path d="M13 1a12 12 0 0110.4 6H13a6 6 0 00-5.2 3L3.2 5.500A12 12 0 0113 1z" fill="#ea4335"/><path d="M23.4 7a12 12 0 01-9.7 18l5-9a6 6 0 00-.5-6.500z" fill="#fbbc04"/><path d="M13.7 25A12 12 0 013.2 5.500L7.8 14a6 6 0 007.5 4.500z" fill="#34a853"/><circle cx="13" cy="13" r="5.5" fill="#fff"/><circle cx="13" cy="13" r="4.3" fill="#4285f4"/></svg>
<div style="left:1111px;top:1073px;width:12px;height:3px;background:#8c8c8c;border-radius:2px"></div>
<svg style="left:1149px;top:1043px;" width="25" height="26" viewBox="0 0 25 26" fill="none"><defs><linearGradient id="rg" x1="0" y1="0" x2="0" y2="1"><stop offset="0" stop-color="#ff5a6e"/><stop offset="1" stop-color="#c8102e"/></linearGradient></defs><ellipse cx="12.5" cy="13" rx="12" ry="12.5" fill="url(#rg)"/><path d="M7 19.500L12.5 6 18 19.5" stroke="#fff" stroke-width="2.4"/></svg>
<svg style="left:1193px;top:1044px;" width="25" height="24" viewBox="0 0 25 24" fill="none"><rect width="25" height="24" fill="#ef443b"/><path d="M11 6l6 6-6 6-6-6z" fill="#fff"/><path d="M16 6.500l5.5 5.5-5.5 5.5-2-2 3.5-3.5-3.5-3.500z" fill="#fff"/></svg>
<div style="left:1229px;top:1036px;width:40px;height:40px;background:rgba(255,255,255,.05);border:1px solid rgba(255,255,255,.06);border-radius:4px"></div>
<svg style="left:1236px;top:1043px;" width="26" height="26" viewBox="0 0 26 26" fill="none"><rect x="6" y="1" width="18" height="23" rx="2" fill="#21a366"/><rect x="6" y="1" width="18" height="6" rx="2" fill="#5fd38d"/><rect x="15" y="1" width="9" height="6" fill="#33c481"/><rect x="6" y="13" width="18" height="6" fill="#107c41"/><rect x="6" y="18" width="18" height="6" rx="2" fill="#185c37"/><rect x="15" y="7" width="9" height="6" fill="#21a366"/><rect x="1" y="10" width="13" height="13" rx="1.5" fill="#107c41"/><text x="7.5" y="20" font-family="Liberation Sans,sans-serif" font-size="10" font-weight="bold" fill="#fff" text-anchor="middle">X</text></svg>
<div style="left:1243px;top:1073px;width:12px;height:3px;background:#4cc2ff;border-radius:2px"></div>
<svg style="left:1281px;top:1042px;" width="25" height="27" viewBox="0 0 25 27" fill="none"><path d="M2 2h15l5 5v18H2z" fill="#f4f4f4"/><path d="M2 12h20v13H2z" fill="#8bc34a"/><path d="M2 18h20v7H2z" fill="#6aa82e"/><path d="M7 7v8M10 11h6" stroke="#333" stroke-width="1.5"/><path d="M22 2L14 14l-1 3 3-1 8-12z" fill="#e8c35a" stroke="#8a6d1b" stroke-width=".6"/></svg>
<div style="left:1290px;top:1073px;width:6px;height:3px;background:#8c8c8c;border-radius:2px"></div>
<svg style="left:1695px;top:1050px;" width="14" height="10" viewBox="0 0 14 10" fill="none"><path d="M2 8l5-5 5 5" stroke="#f0f0f0" stroke-width="1.7"/></svg>
<svg style="left:1725px;top:1047px;" width="20" height="18" viewBox="0 0 20 18" fill="none"><path d="M5 13.500a3.5 3.5 0 01.3-7 5 5 0 019.4-.5 4 4 0 011 7.500z" fill="#8a8a8a"/><path d="M3 2l14 14" stroke="#d8d8d8" stroke-width="1.3"/></svg>
<svg style="left:1757px;top:1046px;" width="19" height="19" viewBox="0 0 19 19" fill="none"><rect x="1" y="3" width="13" height="10" rx="1" stroke="#f0f0f0" stroke-width="1.3"/><path d="M4.5 16.500h6M7.5 13v3.5" stroke="#f0f0f0" stroke-width="1.3"/><rect x="12.5" y="1" width="4" height="7" rx=".8" stroke="#f0f0f0" stroke-width="1.2" fill="#1b1e24"/><path d="M14.5 8v8" stroke="#f0f0f0" stroke-width="1.2"/></svg>
<svg style="left:1781px;top:1047px;" width="19" height="18" viewBox="0 0 19 18" fill="none"><path d="M2 6.500h3l4-3.500v12l-4-3.500H2z" stroke="#f0f0f0" stroke-width="1.2" stroke-linejoin="round"/><path d="M11.5 6.500c1 1.5 1 3.5 0 5M13.5 4.500c2 2.5 2 6.5 0 9M15.7 3c2.8 3.5 2.8 8.5 0 12" stroke="#f0f0f0" stroke-width="1.1"/></svg>
<div class="t" style="left:1848px;top:1041.8px;font-size:12.5px;color:#f5f5f5;letter-spacing:-0.27px;">11:48</div>
<div class="t" style="left:1816px;top:1058.2px;font-size:12.5px;color:#f5f5f5;letter-spacing:-0.16px;">31/01/2026</div>
<svg style="left:1884px;top:1047px;" width="16" height="18" viewBox="0 0 16 18" fill="none"><path d="M8 1.500a5 5 0 015 5v3.500l1.5 3H1.500L3 10V6.500a5 5 0 015-5z" stroke="#f0f0f0" stroke-width="1.3" stroke-linejoin="round"/><path d="M6 14.500a2 2 0 004 0" stroke="#f0f0f0" stroke-width="1.3"/></svg>
</div></body>
</html>
